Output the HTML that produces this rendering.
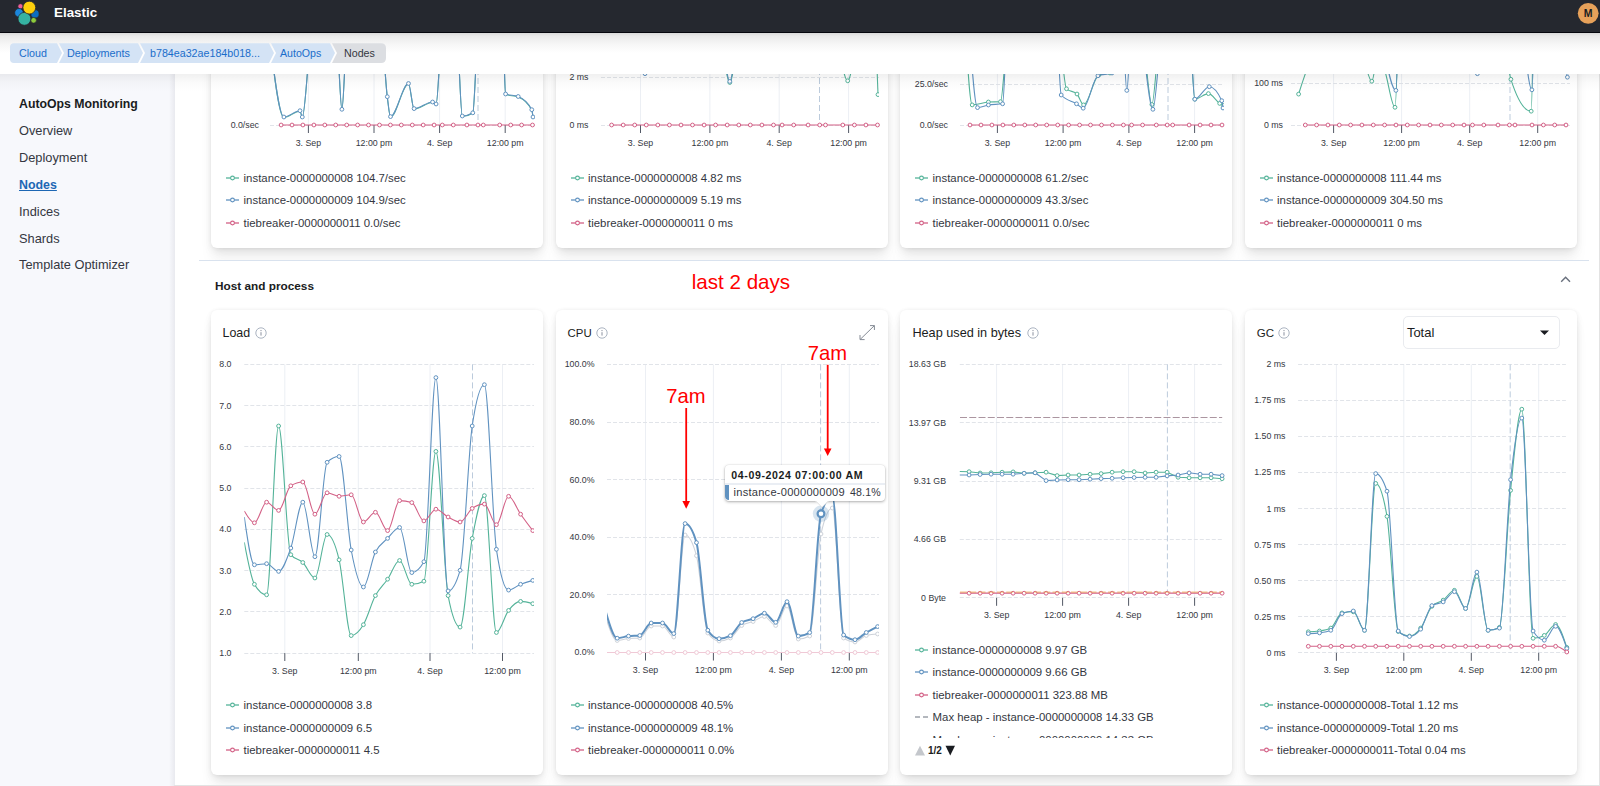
<!DOCTYPE html>
<html><head><meta charset="utf-8"><style>
*{box-sizing:border-box}
html,body{margin:0;padding:0;width:1600px;height:786px;overflow:hidden;background:#fff;font-family:"Liberation Sans",sans-serif;color:#343741}
.abs{position:absolute}
.panel{position:absolute;width:332px;background:#fff;border-radius:6px;box-shadow:0 0.9px 4px -1px rgba(0,0,0,.08),0 2.6px 8px -1px rgba(0,0,0,.06),0 5.7px 12px -1px rgba(0,0,0,.05),0 15px 15px -1px rgba(0,0,0,.04)}
.lg{position:absolute;font-size:11.4px;line-height:16px;white-space:nowrap;color:#343741}
.side{position:absolute;left:19px;font-size:12.8px;line-height:16px;white-space:nowrap;color:#343741}
svg text{font-family:"Liberation Sans",sans-serif}
</style></head><body>
<div class="abs" style="left:0;top:74px;width:175px;height:712px;background:#f7f8fc"></div><div class="abs" style="left:169px;top:74px;width:6px;height:712px;background:linear-gradient(to right,rgba(0,0,30,0),rgba(0,0,30,.035) 60%,rgba(0,0,30,.06))"></div>
<div class="side" style="top:96px;font-weight:bold;font-size:12.3px;color:#1a1c21">AutoOps Monitoring</div>
<div class="side" style="top:122.5px">Overview</div>
<div class="side" style="top:149.5px">Deployment</div>
<div class="side" style="top:176.5px;font-weight:bold;font-size:12.4px;color:#1d67b4;text-decoration:underline">Nodes</div>
<div class="side" style="top:203.5px">Indices</div>
<div class="side" style="top:230.5px">Shards</div>
<div class="side" style="top:257px">Template Optimizer</div>
<div class="abs" style="left:0;top:0;width:1600px;height:260px;overflow:hidden"><div class="panel" style="left:211px;top:-100px;height:347.8px"></div><div class="abs" style="left:211px;top:0;width:332px;height:260px"><svg width="14" height="8" style="position:absolute;left:15px;top:173.6px"><line x1="0" y1="4" x2="13" y2="4" stroke="#54b399" stroke-width="1.3"/><circle cx="6.5" cy="4" r="1.9" fill="#fff" stroke="#54b399" stroke-width="1.1"/></svg><div class="lg" style="left:32.6px;top:169.6px">instance-0000000008 104.7/sec</div><svg width="14" height="8" style="position:absolute;left:15px;top:196.2px"><line x1="0" y1="4" x2="13" y2="4" stroke="#6092c0" stroke-width="1.3"/><circle cx="6.5" cy="4" r="1.9" fill="#fff" stroke="#6092c0" stroke-width="1.1"/></svg><div class="lg" style="left:32.6px;top:192.2px">instance-0000000009 104.9/sec</div><svg width="14" height="8" style="position:absolute;left:15px;top:218.8px"><line x1="0" y1="4" x2="13" y2="4" stroke="#d36086" stroke-width="1.3"/><circle cx="6.5" cy="4" r="1.9" fill="#fff" stroke="#d36086" stroke-width="1.1"/></svg><div class="lg" style="left:32.6px;top:214.8px">tiebreaker-0000000011 0.0/sec</div></div><div class="panel" style="left:555.5px;top:-100px;height:347.8px"></div><div class="abs" style="left:555.5px;top:0;width:332px;height:260px"><svg width="14" height="8" style="position:absolute;left:15px;top:173.6px"><line x1="0" y1="4" x2="13" y2="4" stroke="#54b399" stroke-width="1.3"/><circle cx="6.5" cy="4" r="1.9" fill="#fff" stroke="#54b399" stroke-width="1.1"/></svg><div class="lg" style="left:32.6px;top:169.6px">instance-0000000008 4.82 ms</div><svg width="14" height="8" style="position:absolute;left:15px;top:196.2px"><line x1="0" y1="4" x2="13" y2="4" stroke="#6092c0" stroke-width="1.3"/><circle cx="6.5" cy="4" r="1.9" fill="#fff" stroke="#6092c0" stroke-width="1.1"/></svg><div class="lg" style="left:32.6px;top:192.2px">instance-0000000009 5.19 ms</div><svg width="14" height="8" style="position:absolute;left:15px;top:218.8px"><line x1="0" y1="4" x2="13" y2="4" stroke="#d36086" stroke-width="1.3"/><circle cx="6.5" cy="4" r="1.9" fill="#fff" stroke="#d36086" stroke-width="1.1"/></svg><div class="lg" style="left:32.6px;top:214.8px">tiebreaker-0000000011 0 ms</div></div><div class="panel" style="left:900px;top:-100px;height:347.8px"></div><div class="abs" style="left:900px;top:0;width:332px;height:260px"><svg width="14" height="8" style="position:absolute;left:15px;top:173.6px"><line x1="0" y1="4" x2="13" y2="4" stroke="#54b399" stroke-width="1.3"/><circle cx="6.5" cy="4" r="1.9" fill="#fff" stroke="#54b399" stroke-width="1.1"/></svg><div class="lg" style="left:32.6px;top:169.6px">instance-0000000008 61.2/sec</div><svg width="14" height="8" style="position:absolute;left:15px;top:196.2px"><line x1="0" y1="4" x2="13" y2="4" stroke="#6092c0" stroke-width="1.3"/><circle cx="6.5" cy="4" r="1.9" fill="#fff" stroke="#6092c0" stroke-width="1.1"/></svg><div class="lg" style="left:32.6px;top:192.2px">instance-0000000009 43.3/sec</div><svg width="14" height="8" style="position:absolute;left:15px;top:218.8px"><line x1="0" y1="4" x2="13" y2="4" stroke="#d36086" stroke-width="1.3"/><circle cx="6.5" cy="4" r="1.9" fill="#fff" stroke="#d36086" stroke-width="1.1"/></svg><div class="lg" style="left:32.6px;top:214.8px">tiebreaker-0000000011 0.0/sec</div></div><div class="panel" style="left:1244.5px;top:-100px;height:347.8px"></div><div class="abs" style="left:1244.5px;top:0;width:332px;height:260px"><svg width="14" height="8" style="position:absolute;left:15px;top:173.6px"><line x1="0" y1="4" x2="13" y2="4" stroke="#54b399" stroke-width="1.3"/><circle cx="6.5" cy="4" r="1.9" fill="#fff" stroke="#54b399" stroke-width="1.1"/></svg><div class="lg" style="left:32.6px;top:169.6px">instance-0000000008 111.44 ms</div><svg width="14" height="8" style="position:absolute;left:15px;top:196.2px"><line x1="0" y1="4" x2="13" y2="4" stroke="#6092c0" stroke-width="1.3"/><circle cx="6.5" cy="4" r="1.9" fill="#fff" stroke="#6092c0" stroke-width="1.1"/></svg><div class="lg" style="left:32.6px;top:192.2px">instance-0000000009 304.50 ms</div><svg width="14" height="8" style="position:absolute;left:15px;top:218.8px"><line x1="0" y1="4" x2="13" y2="4" stroke="#d36086" stroke-width="1.3"/><circle cx="6.5" cy="4" r="1.9" fill="#fff" stroke="#d36086" stroke-width="1.1"/></svg><div class="lg" style="left:32.6px;top:214.8px">tiebreaker-0000000011 0 ms</div></div></div><div class="panel" style="left:211px;top:310px;height:464.5px"></div><div class="panel" style="left:555.5px;top:310px;height:464.5px"></div><div class="panel" style="left:900px;top:310px;height:464.5px"></div><div class="panel" style="left:1244.5px;top:310px;height:464.5px"></div>
<div class="abs" style="left:198.5px;top:260px;width:1390.5px;height:1px;background:#d9e2ee"></div>
<div class="abs" style="left:215px;top:278px;font-size:11.8px;font-weight:bold;color:#1a1c21;line-height:16px">Host and process</div>
<svg class="abs" style="left:1558px;top:274px" width="16" height="12"><polyline points="3.2,7.8 7.6,3.2 12,7.8" fill="none" stroke="#69707d" stroke-width="1.4"/></svg>
<div class="abs" style="left:222.5px;top:324.5px;font-size:12.4px;line-height:16px;color:#1a1c21">Load</div>
<svg class="abs" style="left:254.8px;top:326.8px" width="12" height="12"><circle cx="6" cy="6" r="5.2" fill="none" stroke="#a2abba" stroke-width="0.9"/><circle cx="6" cy="3.6" r="0.6" fill="#7d8593"/><line x1="6" y1="5.2" x2="6" y2="8.6" stroke="#7d8593" stroke-width="0.9"/></svg>
<div class="abs" style="left:567.6px;top:324.5px;font-size:11.4px;line-height:16px;color:#1a1c21">CPU</div>
<svg class="abs" style="left:596.4px;top:326.6px" width="12" height="12"><circle cx="6" cy="6" r="5.2" fill="none" stroke="#a2abba" stroke-width="0.9"/><circle cx="6" cy="3.6" r="0.6" fill="#7d8593"/><line x1="6" y1="5.2" x2="6" y2="8.6" stroke="#7d8593" stroke-width="0.9"/></svg>
<div class="abs" style="left:912.4px;top:324.5px;font-size:12.7px;line-height:16px;color:#1a1c21">Heap used in bytes</div>
<svg class="abs" style="left:1026.5px;top:326.6px" width="12" height="12"><circle cx="6" cy="6" r="5.2" fill="none" stroke="#a2abba" stroke-width="0.9"/><circle cx="6" cy="3.6" r="0.6" fill="#7d8593"/><line x1="6" y1="5.2" x2="6" y2="8.6" stroke="#7d8593" stroke-width="0.9"/></svg>
<div class="abs" style="left:1256.7px;top:324.5px;font-size:11.5px;line-height:16px;color:#1a1c21">GC</div>
<svg class="abs" style="left:1277.7px;top:326.7px" width="12" height="12"><circle cx="6" cy="6" r="5.2" fill="none" stroke="#a2abba" stroke-width="0.9"/><circle cx="6" cy="3.6" r="0.6" fill="#7d8593"/><line x1="6" y1="5.2" x2="6" y2="8.6" stroke="#7d8593" stroke-width="0.9"/></svg>
<div class="abs" style="left:1403.3px;top:316.4px;width:156.7px;height:33px;border:1px solid #e9ebef;border-radius:5px;background:#fff"></div>
<div class="abs" style="left:1406.9px;top:324.7px;font-size:13px;line-height:16px;color:#1a1c21">Total</div>
<svg class="abs" style="left:1539px;top:329px" width="12" height="8"><polygon points="1,1.5 10,1.5 5.5,6" fill="#1a1c21"/></svg>
<svg class="abs" style="left:855px;top:321px" width="24" height="24"><path d="M5,14V18.6H9.6M5,18.6L19.4,4.6M15,4.6H19.4V9" fill="none" stroke="#858b95" stroke-width="1"/></svg>
<svg class="abs" style="left:0;top:0" width="1600" height="786"><defs><clipPath id="c1"><rect x="270.0" y="0" width="265.0" height="786"/></clipPath><clipPath id="c2"><rect x="601.0" y="0" width="278.0" height="786"/></clipPath><clipPath id="c3"><rect x="960.0" y="0" width="264.0" height="786"/></clipPath><clipPath id="c4"><rect x="1291.0" y="0" width="279.0" height="786"/></clipPath><clipPath id="cl"><rect x="244.3" y="0" width="289.7" height="786"/></clipPath><clipPath id="cc"><rect x="607.0" y="0" width="272.0" height="786"/></clipPath><clipPath id="ch"><rect x="959.8" y="0" width="262.4" height="786"/></clipPath><clipPath id="cg"><rect x="1298.1" y="0" width="267.8" height="786"/></clipPath></defs><line x1="308.4" y1="60" x2="308.4" y2="125" stroke="#eceff4"/><line x1="374.0" y1="60" x2="374.0" y2="125" stroke="#eceff4"/><line x1="439.6" y1="60" x2="439.6" y2="125" stroke="#eceff4"/><line x1="505.2" y1="60" x2="505.2" y2="125" stroke="#eceff4"/><line x1="270.0" y1="125.5" x2="535.0" y2="125.5" stroke="#e1e4e9" stroke-dasharray="4,2"/><text x="259.0" y="125.0" text-anchor="end" font-size="8.8" fill="#343741" font-weight="normal" dy="0.34em">0.0/sec</text><line x1="478.0" y1="60" x2="478.0" y2="125" stroke="#bccbdc" stroke-dasharray="6,3"/><line x1="308.4" y1="125" x2="308.4" y2="133" stroke="#535966"/><text x="308.4" y="143.0" text-anchor="middle" font-size="8.8" fill="#343741" font-weight="normal" dy="0.34em">3. Sep</text><line x1="374.0" y1="125" x2="374.0" y2="133" stroke="#535966"/><text x="374.0" y="143.0" text-anchor="middle" font-size="8.8" fill="#343741" font-weight="normal" dy="0.34em">12:00 pm</text><line x1="439.6" y1="125" x2="439.6" y2="133" stroke="#535966"/><text x="439.6" y="143.0" text-anchor="middle" font-size="8.8" fill="#343741" font-weight="normal" dy="0.34em">4. Sep</text><line x1="505.2" y1="125" x2="505.2" y2="133" stroke="#535966"/><text x="505.2" y="143.0" text-anchor="middle" font-size="8.8" fill="#343741" font-weight="normal" dy="0.34em">12:00 pm</text><g opacity="1" clip-path="url(#c1)"><path d="M270.0,40.0C274.6,78.8 279.3,117.5 283.9,117.5C289.3,117.5 294.6,111.2 300.0,111.2C300.8,111.2 301.5,117.5 302.3,117.5C305.4,117.5 308.5,40.0 311.6,40.0C320.0,40.0 328.3,40.0 336.7,40.0C338.4,40.0 340.2,109.8 341.9,109.8C343.6,109.8 345.3,40.0 347.0,40.0C358.6,40.0 370.1,40.0 381.7,40.0C383.6,40.0 385.4,82.9 387.3,97.2C388.4,105.4 389.4,117.1 390.5,117.1C396.5,117.1 402.5,84.0 408.5,84.0C410.4,84.0 412.2,109.1 414.1,109.1C420.3,109.1 426.4,102.5 432.6,102.5C433.8,102.5 434.9,104.5 436.1,104.5C438.0,104.5 439.9,40.0 441.8,40.0C446.9,40.0 451.9,40.0 457.0,40.0C458.8,40.0 460.5,116.5 462.3,116.5C465.8,116.5 469.3,115.4 472.8,113.3C474.5,112.2 476.3,40.0 478.0,40.0C486.3,40.0 494.7,40.0 503.0,40.0C503.9,40.0 504.7,94.2 505.6,94.5C509.8,96.2 514.0,95.3 518.2,97.0C522.7,98.8 527.3,101.4 531.8,110.2C532.2,111.0 532.6,114.2 533.0,117.5" fill="none" stroke="#54b399" stroke-width="1.1" stroke-linejoin="round"/></g><g opacity="1" clip-path="url(#c1)"><path d="M270.0,40.0C274.6,78.5 279.3,117.0 283.9,117.0C289.3,117.0 294.6,110.7 300.0,110.7C300.8,110.7 301.5,117.0 302.3,117.0C305.4,117.0 308.5,40.0 311.6,40.0C320.0,40.0 328.3,40.0 336.7,40.0C338.4,40.0 340.2,109.3 341.9,109.3C343.6,109.3 345.3,40.0 347.0,40.0C358.6,40.0 370.1,40.0 381.7,40.0C383.6,40.0 385.4,82.4 387.3,96.7C388.4,104.8 389.4,116.6 390.5,116.6C396.5,116.6 402.5,83.5 408.5,83.5C410.4,83.5 412.2,108.6 414.1,108.6C420.3,108.6 426.4,102.0 432.6,102.0C433.8,102.0 434.9,104.0 436.1,104.0C438.0,104.0 439.9,40.0 441.8,40.0C446.9,40.0 451.9,40.0 457.0,40.0C458.8,40.0 460.5,116.0 462.3,116.0C465.8,116.0 469.3,114.9 472.8,112.8C474.5,111.7 476.3,40.0 478.0,40.0C486.3,40.0 494.7,40.0 503.0,40.0C503.9,40.0 504.7,93.7 505.6,94.0C509.8,95.7 514.0,94.8 518.2,96.5C522.7,98.3 527.3,100.9 531.8,109.7C532.2,110.5 532.6,113.7 533.0,117.0" fill="none" stroke="#6092c0" stroke-width="1.1" stroke-linejoin="round"/><circle cx="270.0" cy="40.0" r="1.9" fill="#fff" stroke="#6092c0" stroke-width="1"/><circle cx="283.9" cy="117.0" r="1.9" fill="#fff" stroke="#6092c0" stroke-width="1"/><circle cx="300.0" cy="110.7" r="1.9" fill="#fff" stroke="#6092c0" stroke-width="1"/><circle cx="302.3" cy="117.0" r="1.9" fill="#fff" stroke="#6092c0" stroke-width="1"/><circle cx="311.6" cy="40.0" r="1.9" fill="#fff" stroke="#6092c0" stroke-width="1"/><circle cx="336.7" cy="40.0" r="1.9" fill="#fff" stroke="#6092c0" stroke-width="1"/><circle cx="341.9" cy="109.3" r="1.9" fill="#fff" stroke="#6092c0" stroke-width="1"/><circle cx="347.0" cy="40.0" r="1.9" fill="#fff" stroke="#6092c0" stroke-width="1"/><circle cx="381.7" cy="40.0" r="1.9" fill="#fff" stroke="#6092c0" stroke-width="1"/><circle cx="387.3" cy="96.7" r="1.9" fill="#fff" stroke="#6092c0" stroke-width="1"/><circle cx="390.5" cy="116.6" r="1.9" fill="#fff" stroke="#6092c0" stroke-width="1"/><circle cx="408.5" cy="83.5" r="1.9" fill="#fff" stroke="#6092c0" stroke-width="1"/><circle cx="414.1" cy="108.6" r="1.9" fill="#fff" stroke="#6092c0" stroke-width="1"/><circle cx="432.6" cy="102.0" r="1.9" fill="#fff" stroke="#6092c0" stroke-width="1"/><circle cx="436.1" cy="104.0" r="1.9" fill="#fff" stroke="#6092c0" stroke-width="1"/><circle cx="441.8" cy="40.0" r="1.9" fill="#fff" stroke="#6092c0" stroke-width="1"/><circle cx="457.0" cy="40.0" r="1.9" fill="#fff" stroke="#6092c0" stroke-width="1"/><circle cx="462.3" cy="116.0" r="1.9" fill="#fff" stroke="#6092c0" stroke-width="1"/><circle cx="472.8" cy="112.8" r="1.9" fill="#fff" stroke="#6092c0" stroke-width="1"/><circle cx="478.0" cy="40.0" r="1.9" fill="#fff" stroke="#6092c0" stroke-width="1"/><circle cx="503.0" cy="40.0" r="1.9" fill="#fff" stroke="#6092c0" stroke-width="1"/><circle cx="505.6" cy="94.0" r="1.9" fill="#fff" stroke="#6092c0" stroke-width="1"/><circle cx="518.2" cy="96.5" r="1.9" fill="#fff" stroke="#6092c0" stroke-width="1"/><circle cx="531.8" cy="109.7" r="1.9" fill="#fff" stroke="#6092c0" stroke-width="1"/><circle cx="533.0" cy="117.0" r="1.9" fill="#fff" stroke="#6092c0" stroke-width="1"/></g><g opacity="1"><path d="M281.1,125.0L292.0,125.0L302.9,125.0L313.9,125.0L324.8,125.0L335.7,125.0L346.7,125.0L357.6,125.0L368.5,125.0L379.5,125.0L390.4,125.0L401.3,125.0L412.3,125.0L423.2,125.0L434.1,125.0L442.3,125.0L453.3,125.0L466.9,125.0L477.9,125.0L483.3,125.0L499.7,125.0L510.7,125.0L521.6,125.0L532.5,125.0" fill="none" stroke="#d36086" stroke-width="1.1" stroke-linejoin="round"/><circle cx="281.1" cy="125.0" r="1.9" fill="#fff" stroke="#d36086" stroke-width="1"/><circle cx="292.0" cy="125.0" r="1.9" fill="#fff" stroke="#d36086" stroke-width="1"/><circle cx="302.9" cy="125.0" r="1.9" fill="#fff" stroke="#d36086" stroke-width="1"/><circle cx="313.9" cy="125.0" r="1.9" fill="#fff" stroke="#d36086" stroke-width="1"/><circle cx="324.8" cy="125.0" r="1.9" fill="#fff" stroke="#d36086" stroke-width="1"/><circle cx="335.7" cy="125.0" r="1.9" fill="#fff" stroke="#d36086" stroke-width="1"/><circle cx="346.7" cy="125.0" r="1.9" fill="#fff" stroke="#d36086" stroke-width="1"/><circle cx="357.6" cy="125.0" r="1.9" fill="#fff" stroke="#d36086" stroke-width="1"/><circle cx="368.5" cy="125.0" r="1.9" fill="#fff" stroke="#d36086" stroke-width="1"/><circle cx="379.5" cy="125.0" r="1.9" fill="#fff" stroke="#d36086" stroke-width="1"/><circle cx="390.4" cy="125.0" r="1.9" fill="#fff" stroke="#d36086" stroke-width="1"/><circle cx="401.3" cy="125.0" r="1.9" fill="#fff" stroke="#d36086" stroke-width="1"/><circle cx="412.3" cy="125.0" r="1.9" fill="#fff" stroke="#d36086" stroke-width="1"/><circle cx="423.2" cy="125.0" r="1.9" fill="#fff" stroke="#d36086" stroke-width="1"/><circle cx="434.1" cy="125.0" r="1.9" fill="#fff" stroke="#d36086" stroke-width="1"/><circle cx="442.3" cy="125.0" r="1.9" fill="#fff" stroke="#d36086" stroke-width="1"/><circle cx="453.3" cy="125.0" r="1.9" fill="#fff" stroke="#d36086" stroke-width="1"/><circle cx="466.9" cy="125.0" r="1.9" fill="#fff" stroke="#d36086" stroke-width="1"/><circle cx="477.9" cy="125.0" r="1.9" fill="#fff" stroke="#d36086" stroke-width="1"/><circle cx="483.3" cy="125.0" r="1.9" fill="#fff" stroke="#d36086" stroke-width="1"/><circle cx="499.7" cy="125.0" r="1.9" fill="#fff" stroke="#d36086" stroke-width="1"/><circle cx="510.7" cy="125.0" r="1.9" fill="#fff" stroke="#d36086" stroke-width="1"/><circle cx="521.6" cy="125.0" r="1.9" fill="#fff" stroke="#d36086" stroke-width="1"/><circle cx="532.5" cy="125.0" r="1.9" fill="#fff" stroke="#d36086" stroke-width="1"/></g><line x1="640.5" y1="60" x2="640.5" y2="125" stroke="#eceff4"/><line x1="709.9" y1="60" x2="709.9" y2="125" stroke="#eceff4"/><line x1="779.2" y1="60" x2="779.2" y2="125" stroke="#eceff4"/><line x1="848.6" y1="60" x2="848.6" y2="125" stroke="#eceff4"/><line x1="601.0" y1="125.5" x2="879.0" y2="125.5" stroke="#e1e4e9" stroke-dasharray="4,2"/><text x="588.5" y="125.0" text-anchor="end" font-size="8.8" fill="#343741" font-weight="normal" dy="0.34em">0 ms</text><line x1="601.0" y1="77.5" x2="879.0" y2="77.5" stroke="#e1e4e9" stroke-dasharray="4,2"/><text x="588.5" y="77.0" text-anchor="end" font-size="8.8" fill="#343741" font-weight="normal" dy="0.34em">2 ms</text><line x1="819.5" y1="60" x2="819.5" y2="125" stroke="#bccbdc" stroke-dasharray="6,3"/><line x1="640.5" y1="125" x2="640.5" y2="133" stroke="#535966"/><text x="640.5" y="143.0" text-anchor="middle" font-size="8.8" fill="#343741" font-weight="normal" dy="0.34em">3. Sep</text><line x1="709.9" y1="125" x2="709.9" y2="133" stroke="#535966"/><text x="709.9" y="143.0" text-anchor="middle" font-size="8.8" fill="#343741" font-weight="normal" dy="0.34em">12:00 pm</text><line x1="779.2" y1="125" x2="779.2" y2="133" stroke="#535966"/><text x="779.2" y="143.0" text-anchor="middle" font-size="8.8" fill="#343741" font-weight="normal" dy="0.34em">4. Sep</text><line x1="848.6" y1="125" x2="848.6" y2="133" stroke="#535966"/><text x="848.6" y="143.0" text-anchor="middle" font-size="8.8" fill="#343741" font-weight="normal" dy="0.34em">12:00 pm</text><g opacity="1" clip-path="url(#c2)"><path d="M612.0,40.0C623.0,56.8 634.0,73.7 645.0,73.7C650.0,73.7 655.0,56.9 660.0,40.0" fill="none" stroke="#6092c0" stroke-width="1.1" stroke-linejoin="round"/><circle cx="612.0" cy="40.0" r="1.9" fill="#fff" stroke="#6092c0" stroke-width="1"/><circle cx="645.0" cy="73.7" r="1.9" fill="#fff" stroke="#6092c0" stroke-width="1"/><circle cx="660.0" cy="40.0" r="1.9" fill="#fff" stroke="#6092c0" stroke-width="1"/></g><g opacity="1" clip-path="url(#c2)"><path d="M722.0,40.0C724.6,61.2 727.2,82.5 729.8,82.5C732.2,82.5 734.6,61.2 737.0,40.0" fill="none" stroke="#54b399" stroke-width="1.1" stroke-linejoin="round"/><circle cx="722.0" cy="40.0" r="1.9" fill="#fff" stroke="#54b399" stroke-width="1"/><circle cx="729.8" cy="82.5" r="1.9" fill="#fff" stroke="#54b399" stroke-width="1"/><circle cx="737.0" cy="40.0" r="1.9" fill="#fff" stroke="#54b399" stroke-width="1"/></g><g opacity="1" clip-path="url(#c2)"><path d="M723.0,40.0C725.3,60.7 727.5,81.4 729.8,81.4C731.9,81.4 733.9,60.7 736.0,40.0" fill="none" stroke="#6092c0" stroke-width="1.1" stroke-linejoin="round"/><circle cx="723.0" cy="40.0" r="1.9" fill="#fff" stroke="#6092c0" stroke-width="1"/><circle cx="729.8" cy="81.4" r="1.9" fill="#fff" stroke="#6092c0" stroke-width="1"/><circle cx="736.0" cy="40.0" r="1.9" fill="#fff" stroke="#6092c0" stroke-width="1"/></g><g opacity="1" clip-path="url(#c2)"><path d="M838.0,40.0C841.2,60.4 844.5,80.8 847.7,80.8C850.5,80.8 853.2,60.4 856.0,40.0" fill="none" stroke="#54b399" stroke-width="1.1" stroke-linejoin="round"/><circle cx="838.0" cy="40.0" r="1.9" fill="#fff" stroke="#54b399" stroke-width="1"/><circle cx="847.7" cy="80.8" r="1.9" fill="#fff" stroke="#54b399" stroke-width="1"/><circle cx="856.0" cy="40.0" r="1.9" fill="#fff" stroke="#54b399" stroke-width="1"/></g><g opacity="1" clip-path="url(#c2)"><path d="M876.0,40.0L878.0,94.6" fill="none" stroke="#54b399" stroke-width="1.1" stroke-linejoin="round"/><circle cx="876.0" cy="40.0" r="1.9" fill="#fff" stroke="#54b399" stroke-width="1"/><circle cx="878.0" cy="94.6" r="1.9" fill="#fff" stroke="#54b399" stroke-width="1"/></g><g opacity="1"><path d="M611.6,125.0L623.2,125.0L634.7,125.0L646.3,125.0L657.8,125.0L669.4,125.0L681.0,125.0L692.5,125.0L704.1,125.0L715.6,125.0L727.2,125.0L738.8,125.0L750.3,125.0L761.9,125.0L773.5,125.0L782.1,125.0L793.7,125.0L808.1,125.0L819.7,125.0L825.5,125.0L842.8,125.0L854.4,125.0L865.9,125.0L877.5,125.0" fill="none" stroke="#d36086" stroke-width="1.1" stroke-linejoin="round"/><circle cx="611.6" cy="125.0" r="1.9" fill="#fff" stroke="#d36086" stroke-width="1"/><circle cx="623.2" cy="125.0" r="1.9" fill="#fff" stroke="#d36086" stroke-width="1"/><circle cx="634.7" cy="125.0" r="1.9" fill="#fff" stroke="#d36086" stroke-width="1"/><circle cx="646.3" cy="125.0" r="1.9" fill="#fff" stroke="#d36086" stroke-width="1"/><circle cx="657.8" cy="125.0" r="1.9" fill="#fff" stroke="#d36086" stroke-width="1"/><circle cx="669.4" cy="125.0" r="1.9" fill="#fff" stroke="#d36086" stroke-width="1"/><circle cx="681.0" cy="125.0" r="1.9" fill="#fff" stroke="#d36086" stroke-width="1"/><circle cx="692.5" cy="125.0" r="1.9" fill="#fff" stroke="#d36086" stroke-width="1"/><circle cx="704.1" cy="125.0" r="1.9" fill="#fff" stroke="#d36086" stroke-width="1"/><circle cx="715.6" cy="125.0" r="1.9" fill="#fff" stroke="#d36086" stroke-width="1"/><circle cx="727.2" cy="125.0" r="1.9" fill="#fff" stroke="#d36086" stroke-width="1"/><circle cx="738.8" cy="125.0" r="1.9" fill="#fff" stroke="#d36086" stroke-width="1"/><circle cx="750.3" cy="125.0" r="1.9" fill="#fff" stroke="#d36086" stroke-width="1"/><circle cx="761.9" cy="125.0" r="1.9" fill="#fff" stroke="#d36086" stroke-width="1"/><circle cx="773.5" cy="125.0" r="1.9" fill="#fff" stroke="#d36086" stroke-width="1"/><circle cx="782.1" cy="125.0" r="1.9" fill="#fff" stroke="#d36086" stroke-width="1"/><circle cx="793.7" cy="125.0" r="1.9" fill="#fff" stroke="#d36086" stroke-width="1"/><circle cx="808.1" cy="125.0" r="1.9" fill="#fff" stroke="#d36086" stroke-width="1"/><circle cx="819.7" cy="125.0" r="1.9" fill="#fff" stroke="#d36086" stroke-width="1"/><circle cx="825.5" cy="125.0" r="1.9" fill="#fff" stroke="#d36086" stroke-width="1"/><circle cx="842.8" cy="125.0" r="1.9" fill="#fff" stroke="#d36086" stroke-width="1"/><circle cx="854.4" cy="125.0" r="1.9" fill="#fff" stroke="#d36086" stroke-width="1"/><circle cx="865.9" cy="125.0" r="1.9" fill="#fff" stroke="#d36086" stroke-width="1"/><circle cx="877.5" cy="125.0" r="1.9" fill="#fff" stroke="#d36086" stroke-width="1"/></g><line x1="997.4" y1="60" x2="997.4" y2="125" stroke="#eceff4"/><line x1="1063.1" y1="60" x2="1063.1" y2="125" stroke="#eceff4"/><line x1="1128.9" y1="60" x2="1128.9" y2="125" stroke="#eceff4"/><line x1="1194.6" y1="60" x2="1194.6" y2="125" stroke="#eceff4"/><line x1="960.0" y1="125.5" x2="1224.0" y2="125.5" stroke="#e1e4e9" stroke-dasharray="4,2"/><text x="948.0" y="125.0" text-anchor="end" font-size="8.8" fill="#343741" font-weight="normal" dy="0.34em">0.0/sec</text><line x1="960.0" y1="84.5" x2="1224.0" y2="84.5" stroke="#e1e4e9" stroke-dasharray="4,2"/><text x="948.0" y="84.0" text-anchor="end" font-size="8.8" fill="#343741" font-weight="normal" dy="0.34em">25.0/sec</text><line x1="1168.0" y1="60" x2="1168.0" y2="125" stroke="#bccbdc" stroke-dasharray="6,3"/><line x1="997.4" y1="125" x2="997.4" y2="133" stroke="#535966"/><text x="997.4" y="143.0" text-anchor="middle" font-size="8.8" fill="#343741" font-weight="normal" dy="0.34em">3. Sep</text><line x1="1063.1" y1="125" x2="1063.1" y2="133" stroke="#535966"/><text x="1063.1" y="143.0" text-anchor="middle" font-size="8.8" fill="#343741" font-weight="normal" dy="0.34em">12:00 pm</text><line x1="1128.9" y1="125" x2="1128.9" y2="133" stroke="#535966"/><text x="1128.9" y="143.0" text-anchor="middle" font-size="8.8" fill="#343741" font-weight="normal" dy="0.34em">4. Sep</text><line x1="1194.6" y1="125" x2="1194.6" y2="133" stroke="#535966"/><text x="1194.6" y="143.0" text-anchor="middle" font-size="8.8" fill="#343741" font-weight="normal" dy="0.34em">12:00 pm</text><g opacity="1" clip-path="url(#c3)"><path d="M966.0,40.0C968.1,72.5 970.1,104.9 972.2,104.9C977.6,104.9 983.0,102.3 988.4,102.0C992.4,101.8 996.5,101.9 1000.5,101.7C1002.9,101.6 1005.4,40.0 1007.8,40.0C1024.9,40.0 1041.9,40.0 1059.0,40.0C1061.5,40.0 1064.0,86.3 1066.5,88.8C1070.0,92.3 1073.5,90.5 1077.0,94.0C1079.2,96.2 1081.4,104.9 1083.6,104.9C1088.7,104.9 1093.8,76.8 1098.9,75.0C1102.6,73.7 1106.3,74.3 1110.0,73.0C1114.0,71.6 1118.0,40.0 1122.0,40.0C1128.7,40.0 1135.3,40.0 1142.0,40.0C1145.3,40.0 1148.6,104.5 1151.9,104.5C1154.6,104.5 1157.3,40.0 1160.0,40.0C1170.0,40.0 1180.0,40.0 1190.0,40.0C1191.6,40.0 1193.2,99.2 1194.8,99.2C1199.3,99.2 1203.9,93.6 1208.4,93.6C1212.2,93.6 1215.9,101.0 1219.7,103.4C1221.0,104.2 1222.2,104.9 1223.5,105.5" fill="none" stroke="#54b399" stroke-width="1.1" stroke-linejoin="round"/><circle cx="966.0" cy="40.0" r="1.9" fill="#fff" stroke="#54b399" stroke-width="1"/><circle cx="972.2" cy="104.9" r="1.9" fill="#fff" stroke="#54b399" stroke-width="1"/><circle cx="988.4" cy="102.0" r="1.9" fill="#fff" stroke="#54b399" stroke-width="1"/><circle cx="1000.5" cy="101.7" r="1.9" fill="#fff" stroke="#54b399" stroke-width="1"/><circle cx="1007.8" cy="40.0" r="1.9" fill="#fff" stroke="#54b399" stroke-width="1"/><circle cx="1059.0" cy="40.0" r="1.9" fill="#fff" stroke="#54b399" stroke-width="1"/><circle cx="1066.5" cy="88.8" r="1.9" fill="#fff" stroke="#54b399" stroke-width="1"/><circle cx="1077.0" cy="94.0" r="1.9" fill="#fff" stroke="#54b399" stroke-width="1"/><circle cx="1083.6" cy="104.9" r="1.9" fill="#fff" stroke="#54b399" stroke-width="1"/><circle cx="1098.9" cy="75.0" r="1.9" fill="#fff" stroke="#54b399" stroke-width="1"/><circle cx="1110.0" cy="73.0" r="1.9" fill="#fff" stroke="#54b399" stroke-width="1"/><circle cx="1122.0" cy="40.0" r="1.9" fill="#fff" stroke="#54b399" stroke-width="1"/><circle cx="1142.0" cy="40.0" r="1.9" fill="#fff" stroke="#54b399" stroke-width="1"/><circle cx="1151.9" cy="104.5" r="1.9" fill="#fff" stroke="#54b399" stroke-width="1"/><circle cx="1160.0" cy="40.0" r="1.9" fill="#fff" stroke="#54b399" stroke-width="1"/><circle cx="1190.0" cy="40.0" r="1.9" fill="#fff" stroke="#54b399" stroke-width="1"/><circle cx="1194.8" cy="99.2" r="1.9" fill="#fff" stroke="#54b399" stroke-width="1"/><circle cx="1208.4" cy="93.6" r="1.9" fill="#fff" stroke="#54b399" stroke-width="1"/><circle cx="1219.7" cy="103.4" r="1.9" fill="#fff" stroke="#54b399" stroke-width="1"/><circle cx="1223.5" cy="105.5" r="1.9" fill="#fff" stroke="#54b399" stroke-width="1"/></g><g opacity="1" clip-path="url(#c3)"><path d="M970.0,40.0C972.5,73.8 975.0,107.6 977.5,107.6C981.1,107.6 984.8,105.6 988.4,105.0C993.1,104.2 997.9,104.6 1002.6,103.8C1004.1,103.6 1005.5,40.0 1007.0,40.0C1023.7,40.0 1040.3,40.0 1057.0,40.0C1058.4,40.0 1059.8,93.4 1061.2,95.0C1066.3,100.9 1071.4,100.6 1076.5,103.8C1078.7,105.2 1081.0,108.2 1083.2,108.2C1088.1,108.2 1093.0,77.7 1097.9,75.8C1102.6,73.9 1107.3,74.9 1112.0,73.0C1114.7,71.9 1117.3,40.0 1120.0,40.0C1121.0,40.0 1122.0,40.0 1123.0,40.0C1124.3,40.0 1125.5,90.4 1126.8,90.4C1128.2,90.4 1129.6,40.0 1131.0,40.0C1134.0,40.0 1137.0,40.0 1140.0,40.0C1144.3,40.0 1148.6,109.3 1152.9,109.3C1155.9,109.3 1159.0,40.0 1162.0,40.0C1171.3,40.0 1180.7,40.0 1190.0,40.0C1191.6,40.0 1193.2,99.2 1194.8,99.2C1199.6,99.2 1204.5,86.7 1209.3,86.7C1213.5,86.7 1217.6,91.4 1221.8,100.7C1222.2,101.6 1222.6,104.8 1223.0,108.0" fill="none" stroke="#6092c0" stroke-width="1.1" stroke-linejoin="round"/><circle cx="970.0" cy="40.0" r="1.9" fill="#fff" stroke="#6092c0" stroke-width="1"/><circle cx="977.5" cy="107.6" r="1.9" fill="#fff" stroke="#6092c0" stroke-width="1"/><circle cx="988.4" cy="105.0" r="1.9" fill="#fff" stroke="#6092c0" stroke-width="1"/><circle cx="1002.6" cy="103.8" r="1.9" fill="#fff" stroke="#6092c0" stroke-width="1"/><circle cx="1007.0" cy="40.0" r="1.9" fill="#fff" stroke="#6092c0" stroke-width="1"/><circle cx="1057.0" cy="40.0" r="1.9" fill="#fff" stroke="#6092c0" stroke-width="1"/><circle cx="1061.2" cy="95.0" r="1.9" fill="#fff" stroke="#6092c0" stroke-width="1"/><circle cx="1076.5" cy="103.8" r="1.9" fill="#fff" stroke="#6092c0" stroke-width="1"/><circle cx="1083.2" cy="108.2" r="1.9" fill="#fff" stroke="#6092c0" stroke-width="1"/><circle cx="1097.9" cy="75.8" r="1.9" fill="#fff" stroke="#6092c0" stroke-width="1"/><circle cx="1112.0" cy="73.0" r="1.9" fill="#fff" stroke="#6092c0" stroke-width="1"/><circle cx="1120.0" cy="40.0" r="1.9" fill="#fff" stroke="#6092c0" stroke-width="1"/><circle cx="1123.0" cy="40.0" r="1.9" fill="#fff" stroke="#6092c0" stroke-width="1"/><circle cx="1126.8" cy="90.4" r="1.9" fill="#fff" stroke="#6092c0" stroke-width="1"/><circle cx="1131.0" cy="40.0" r="1.9" fill="#fff" stroke="#6092c0" stroke-width="1"/><circle cx="1140.0" cy="40.0" r="1.9" fill="#fff" stroke="#6092c0" stroke-width="1"/><circle cx="1152.9" cy="109.3" r="1.9" fill="#fff" stroke="#6092c0" stroke-width="1"/><circle cx="1162.0" cy="40.0" r="1.9" fill="#fff" stroke="#6092c0" stroke-width="1"/><circle cx="1190.0" cy="40.0" r="1.9" fill="#fff" stroke="#6092c0" stroke-width="1"/><circle cx="1194.8" cy="99.2" r="1.9" fill="#fff" stroke="#6092c0" stroke-width="1"/><circle cx="1209.3" cy="86.7" r="1.9" fill="#fff" stroke="#6092c0" stroke-width="1"/><circle cx="1221.8" cy="100.7" r="1.9" fill="#fff" stroke="#6092c0" stroke-width="1"/><circle cx="1223.0" cy="108.0" r="1.9" fill="#fff" stroke="#6092c0" stroke-width="1"/></g><g opacity="1"><path d="M970.0,125.0L981.0,125.0L991.9,125.0L1002.9,125.0L1013.8,125.0L1024.8,125.0L1035.7,125.0L1046.7,125.0L1057.7,125.0L1068.6,125.0L1079.6,125.0L1090.5,125.0L1101.5,125.0L1112.4,125.0L1123.4,125.0L1131.6,125.0L1142.6,125.0L1156.3,125.0L1167.2,125.0L1172.7,125.0L1189.1,125.0L1200.1,125.0L1211.0,125.0L1222.0,125.0" fill="none" stroke="#d36086" stroke-width="1.1" stroke-linejoin="round"/><circle cx="970.0" cy="125.0" r="1.9" fill="#fff" stroke="#d36086" stroke-width="1"/><circle cx="981.0" cy="125.0" r="1.9" fill="#fff" stroke="#d36086" stroke-width="1"/><circle cx="991.9" cy="125.0" r="1.9" fill="#fff" stroke="#d36086" stroke-width="1"/><circle cx="1002.9" cy="125.0" r="1.9" fill="#fff" stroke="#d36086" stroke-width="1"/><circle cx="1013.8" cy="125.0" r="1.9" fill="#fff" stroke="#d36086" stroke-width="1"/><circle cx="1024.8" cy="125.0" r="1.9" fill="#fff" stroke="#d36086" stroke-width="1"/><circle cx="1035.7" cy="125.0" r="1.9" fill="#fff" stroke="#d36086" stroke-width="1"/><circle cx="1046.7" cy="125.0" r="1.9" fill="#fff" stroke="#d36086" stroke-width="1"/><circle cx="1057.7" cy="125.0" r="1.9" fill="#fff" stroke="#d36086" stroke-width="1"/><circle cx="1068.6" cy="125.0" r="1.9" fill="#fff" stroke="#d36086" stroke-width="1"/><circle cx="1079.6" cy="125.0" r="1.9" fill="#fff" stroke="#d36086" stroke-width="1"/><circle cx="1090.5" cy="125.0" r="1.9" fill="#fff" stroke="#d36086" stroke-width="1"/><circle cx="1101.5" cy="125.0" r="1.9" fill="#fff" stroke="#d36086" stroke-width="1"/><circle cx="1112.4" cy="125.0" r="1.9" fill="#fff" stroke="#d36086" stroke-width="1"/><circle cx="1123.4" cy="125.0" r="1.9" fill="#fff" stroke="#d36086" stroke-width="1"/><circle cx="1131.6" cy="125.0" r="1.9" fill="#fff" stroke="#d36086" stroke-width="1"/><circle cx="1142.6" cy="125.0" r="1.9" fill="#fff" stroke="#d36086" stroke-width="1"/><circle cx="1156.3" cy="125.0" r="1.9" fill="#fff" stroke="#d36086" stroke-width="1"/><circle cx="1167.2" cy="125.0" r="1.9" fill="#fff" stroke="#d36086" stroke-width="1"/><circle cx="1172.7" cy="125.0" r="1.9" fill="#fff" stroke="#d36086" stroke-width="1"/><circle cx="1189.1" cy="125.0" r="1.9" fill="#fff" stroke="#d36086" stroke-width="1"/><circle cx="1200.1" cy="125.0" r="1.9" fill="#fff" stroke="#d36086" stroke-width="1"/><circle cx="1211.0" cy="125.0" r="1.9" fill="#fff" stroke="#d36086" stroke-width="1"/><circle cx="1222.0" cy="125.0" r="1.9" fill="#fff" stroke="#d36086" stroke-width="1"/></g><line x1="1333.6" y1="60" x2="1333.6" y2="125" stroke="#eceff4"/><line x1="1401.6" y1="60" x2="1401.6" y2="125" stroke="#eceff4"/><line x1="1469.7" y1="60" x2="1469.7" y2="125" stroke="#eceff4"/><line x1="1537.7" y1="60" x2="1537.7" y2="125" stroke="#eceff4"/><line x1="1291.0" y1="125.5" x2="1570.0" y2="125.5" stroke="#e1e4e9" stroke-dasharray="4,2"/><text x="1283.0" y="125.0" text-anchor="end" font-size="8.8" fill="#343741" font-weight="normal" dy="0.34em">0 ms</text><line x1="1291.0" y1="83.5" x2="1570.0" y2="83.5" stroke="#e1e4e9" stroke-dasharray="4,2"/><text x="1283.0" y="83.4" text-anchor="end" font-size="8.8" fill="#343741" font-weight="normal" dy="0.34em">100 ms</text><line x1="1510.0" y1="60" x2="1510.0" y2="125" stroke="#bccbdc" stroke-dasharray="6,3"/><line x1="1333.6" y1="125" x2="1333.6" y2="133" stroke="#535966"/><text x="1333.6" y="143.0" text-anchor="middle" font-size="8.8" fill="#343741" font-weight="normal" dy="0.34em">3. Sep</text><line x1="1401.6" y1="125" x2="1401.6" y2="133" stroke="#535966"/><text x="1401.6" y="143.0" text-anchor="middle" font-size="8.8" fill="#343741" font-weight="normal" dy="0.34em">12:00 pm</text><line x1="1469.7" y1="125" x2="1469.7" y2="133" stroke="#535966"/><text x="1469.7" y="143.0" text-anchor="middle" font-size="8.8" fill="#343741" font-weight="normal" dy="0.34em">4. Sep</text><line x1="1537.7" y1="125" x2="1537.7" y2="133" stroke="#535966"/><text x="1537.7" y="143.0" text-anchor="middle" font-size="8.8" fill="#343741" font-weight="normal" dy="0.34em">12:00 pm</text><g opacity="1" clip-path="url(#c4)"><path d="M1298.6,94.1C1303.1,79.9 1307.5,65.7 1312.0,58.0C1317.0,49.3 1322.0,45.0 1327.0,45.0C1331.5,45.0 1336.1,72.5 1340.6,72.5C1344.4,72.5 1348.2,45.0 1352.0,45.0C1355.7,45.0 1359.3,50.7 1363.0,58.0C1365.9,63.8 1368.9,81.2 1371.8,81.2C1373.9,81.2 1375.9,55.0 1378.0,55.0C1380.2,55.0 1382.4,63.9 1384.6,70.0C1388.1,79.6 1391.5,107.3 1395.0,107.3C1396.0,107.3 1397.0,73.7 1398.0,40.0" fill="none" stroke="#54b399" stroke-width="1.1" stroke-linejoin="round"/><circle cx="1298.6" cy="94.1" r="1.9" fill="#fff" stroke="#54b399" stroke-width="1"/></g><g opacity="1"><path d="M1371.8,81.2" fill="none" stroke="#54b399" stroke-width="1.1" stroke-linejoin="round"/><circle cx="1371.8" cy="81.2" r="1.9" fill="#fff" stroke="#54b399" stroke-width="1"/></g><g opacity="1"><path d="M1395.0,107.3" fill="none" stroke="#54b399" stroke-width="1.1" stroke-linejoin="round"/><circle cx="1395.0" cy="107.3" r="1.9" fill="#fff" stroke="#54b399" stroke-width="1"/></g><g opacity="1" clip-path="url(#c4)"><path d="M1384.0,50.0C1388.0,70.2 1391.9,90.4 1395.9,90.4C1396.6,90.4 1397.3,65.2 1398.0,40.0" fill="none" stroke="#6092c0" stroke-width="1.1" stroke-linejoin="round"/><circle cx="1384.0" cy="50.0" r="1.9" fill="#fff" stroke="#6092c0" stroke-width="1"/><circle cx="1395.9" cy="90.4" r="1.9" fill="#fff" stroke="#6092c0" stroke-width="1"/><circle cx="1398.0" cy="40.0" r="1.9" fill="#fff" stroke="#6092c0" stroke-width="1"/></g><g opacity="1" clip-path="url(#c4)"><path d="M1470.0,40.0C1472.5,56.9 1474.9,73.7 1477.4,73.7C1479.9,73.7 1482.5,56.9 1485.0,40.0" fill="none" stroke="#6092c0" stroke-width="1.1" stroke-linejoin="round"/><circle cx="1470.0" cy="40.0" r="1.9" fill="#fff" stroke="#6092c0" stroke-width="1"/><circle cx="1477.4" cy="73.7" r="1.9" fill="#fff" stroke="#6092c0" stroke-width="1"/><circle cx="1485.0" cy="40.0" r="1.9" fill="#fff" stroke="#6092c0" stroke-width="1"/></g><g opacity="1" clip-path="url(#c4)"><path d="M1505.0,40.0C1507.0,56.6 1508.9,73.1 1510.9,79.3C1517.7,100.6 1524.4,111.2 1531.2,111.2C1531.8,111.2 1532.4,75.6 1533.0,40.0" fill="none" stroke="#54b399" stroke-width="1.1" stroke-linejoin="round"/><circle cx="1505.0" cy="40.0" r="1.9" fill="#fff" stroke="#54b399" stroke-width="1"/><circle cx="1510.9" cy="79.3" r="1.9" fill="#fff" stroke="#54b399" stroke-width="1"/><circle cx="1531.2" cy="111.2" r="1.9" fill="#fff" stroke="#54b399" stroke-width="1"/><circle cx="1533.0" cy="40.0" r="1.9" fill="#fff" stroke="#54b399" stroke-width="1"/></g><g opacity="1" clip-path="url(#c4)"><path d="M1524.0,40.0C1526.6,64.9 1529.3,89.8 1531.9,89.8C1532.6,89.8 1533.3,64.9 1534.0,40.0" fill="none" stroke="#6092c0" stroke-width="1.1" stroke-linejoin="round"/><circle cx="1524.0" cy="40.0" r="1.9" fill="#fff" stroke="#6092c0" stroke-width="1"/><circle cx="1531.9" cy="89.8" r="1.9" fill="#fff" stroke="#6092c0" stroke-width="1"/><circle cx="1534.0" cy="40.0" r="1.9" fill="#fff" stroke="#6092c0" stroke-width="1"/></g><g opacity="1" clip-path="url(#c4)"><path d="M1563.0,40.0C1564.5,58.6 1565.9,77.2 1567.4,77.2C1568.3,77.2 1569.1,58.6 1570.0,40.0" fill="none" stroke="#6092c0" stroke-width="1.1" stroke-linejoin="round"/><circle cx="1563.0" cy="40.0" r="1.9" fill="#fff" stroke="#6092c0" stroke-width="1"/><circle cx="1567.4" cy="77.2" r="1.9" fill="#fff" stroke="#6092c0" stroke-width="1"/><circle cx="1570.0" cy="40.0" r="1.9" fill="#fff" stroke="#6092c0" stroke-width="1"/></g><g opacity="1"><path d="M1305.3,125.0L1316.6,125.0L1327.9,125.0L1339.3,125.0L1350.6,125.0L1361.9,125.0L1373.3,125.0L1384.6,125.0L1396.0,125.0L1407.3,125.0L1418.6,125.0L1430.0,125.0L1441.3,125.0L1452.7,125.0L1464.0,125.0L1472.5,125.0L1483.8,125.0L1498.0,125.0L1509.4,125.0L1515.0,125.0L1532.0,125.0L1543.4,125.0L1554.7,125.0L1566.0,125.0" fill="none" stroke="#d36086" stroke-width="1.1" stroke-linejoin="round"/><circle cx="1305.3" cy="125.0" r="1.9" fill="#fff" stroke="#d36086" stroke-width="1"/><circle cx="1316.6" cy="125.0" r="1.9" fill="#fff" stroke="#d36086" stroke-width="1"/><circle cx="1327.9" cy="125.0" r="1.9" fill="#fff" stroke="#d36086" stroke-width="1"/><circle cx="1339.3" cy="125.0" r="1.9" fill="#fff" stroke="#d36086" stroke-width="1"/><circle cx="1350.6" cy="125.0" r="1.9" fill="#fff" stroke="#d36086" stroke-width="1"/><circle cx="1361.9" cy="125.0" r="1.9" fill="#fff" stroke="#d36086" stroke-width="1"/><circle cx="1373.3" cy="125.0" r="1.9" fill="#fff" stroke="#d36086" stroke-width="1"/><circle cx="1384.6" cy="125.0" r="1.9" fill="#fff" stroke="#d36086" stroke-width="1"/><circle cx="1396.0" cy="125.0" r="1.9" fill="#fff" stroke="#d36086" stroke-width="1"/><circle cx="1407.3" cy="125.0" r="1.9" fill="#fff" stroke="#d36086" stroke-width="1"/><circle cx="1418.6" cy="125.0" r="1.9" fill="#fff" stroke="#d36086" stroke-width="1"/><circle cx="1430.0" cy="125.0" r="1.9" fill="#fff" stroke="#d36086" stroke-width="1"/><circle cx="1441.3" cy="125.0" r="1.9" fill="#fff" stroke="#d36086" stroke-width="1"/><circle cx="1452.7" cy="125.0" r="1.9" fill="#fff" stroke="#d36086" stroke-width="1"/><circle cx="1464.0" cy="125.0" r="1.9" fill="#fff" stroke="#d36086" stroke-width="1"/><circle cx="1472.5" cy="125.0" r="1.9" fill="#fff" stroke="#d36086" stroke-width="1"/><circle cx="1483.8" cy="125.0" r="1.9" fill="#fff" stroke="#d36086" stroke-width="1"/><circle cx="1498.0" cy="125.0" r="1.9" fill="#fff" stroke="#d36086" stroke-width="1"/><circle cx="1509.4" cy="125.0" r="1.9" fill="#fff" stroke="#d36086" stroke-width="1"/><circle cx="1515.0" cy="125.0" r="1.9" fill="#fff" stroke="#d36086" stroke-width="1"/><circle cx="1532.0" cy="125.0" r="1.9" fill="#fff" stroke="#d36086" stroke-width="1"/><circle cx="1543.4" cy="125.0" r="1.9" fill="#fff" stroke="#d36086" stroke-width="1"/><circle cx="1554.7" cy="125.0" r="1.9" fill="#fff" stroke="#d36086" stroke-width="1"/><circle cx="1566.0" cy="125.0" r="1.9" fill="#fff" stroke="#d36086" stroke-width="1"/></g><line x1="284.8" y1="364.4" x2="284.8" y2="653" stroke="#eceff4"/><line x1="358.3" y1="364.4" x2="358.3" y2="653" stroke="#eceff4"/><line x1="430.0" y1="364.4" x2="430.0" y2="653" stroke="#eceff4"/><line x1="502.5" y1="364.4" x2="502.5" y2="653" stroke="#eceff4"/><line x1="244.3" y1="364.5" x2="534.0" y2="364.5" stroke="#e1e4e9" stroke-dasharray="4,2"/><text x="231.5" y="364.4" text-anchor="end" font-size="8.8" fill="#343741" font-weight="normal" dy="0.34em">8.0</text><line x1="244.3" y1="405.5" x2="534.0" y2="405.5" stroke="#e1e4e9" stroke-dasharray="4,2"/><text x="231.5" y="405.7" text-anchor="end" font-size="8.8" fill="#343741" font-weight="normal" dy="0.34em">7.0</text><line x1="244.3" y1="446.5" x2="534.0" y2="446.5" stroke="#e1e4e9" stroke-dasharray="4,2"/><text x="231.5" y="446.9" text-anchor="end" font-size="8.8" fill="#343741" font-weight="normal" dy="0.34em">6.0</text><line x1="244.3" y1="488.5" x2="534.0" y2="488.5" stroke="#e1e4e9" stroke-dasharray="4,2"/><text x="231.5" y="488.1" text-anchor="end" font-size="8.8" fill="#343741" font-weight="normal" dy="0.34em">5.0</text><line x1="244.3" y1="529.5" x2="534.0" y2="529.5" stroke="#e1e4e9" stroke-dasharray="4,2"/><text x="231.5" y="529.4" text-anchor="end" font-size="8.8" fill="#343741" font-weight="normal" dy="0.34em">4.0</text><line x1="244.3" y1="570.5" x2="534.0" y2="570.5" stroke="#e1e4e9" stroke-dasharray="4,2"/><text x="231.5" y="570.6" text-anchor="end" font-size="8.8" fill="#343741" font-weight="normal" dy="0.34em">3.0</text><line x1="244.3" y1="611.5" x2="534.0" y2="611.5" stroke="#e1e4e9" stroke-dasharray="4,2"/><text x="231.5" y="611.9" text-anchor="end" font-size="8.8" fill="#343741" font-weight="normal" dy="0.34em">2.0</text><line x1="244.3" y1="653.5" x2="534.0" y2="653.5" stroke="#e1e4e9" stroke-dasharray="4,2"/><text x="231.5" y="653.1" text-anchor="end" font-size="8.8" fill="#343741" font-weight="normal" dy="0.34em">1.0</text><line x1="472.5" y1="364.4" x2="472.5" y2="653" stroke="#bccbdc" stroke-dasharray="6,3"/><line x1="284.8" y1="653" x2="284.8" y2="661" stroke="#535966"/><text x="284.8" y="671.0" text-anchor="middle" font-size="8.8" fill="#343741" font-weight="normal" dy="0.34em">3. Sep</text><line x1="358.3" y1="653" x2="358.3" y2="661" stroke="#535966"/><text x="358.3" y="671.0" text-anchor="middle" font-size="8.8" fill="#343741" font-weight="normal" dy="0.34em">12:00 pm</text><line x1="430.0" y1="653" x2="430.0" y2="661" stroke="#535966"/><text x="430.0" y="671.0" text-anchor="middle" font-size="8.8" fill="#343741" font-weight="normal" dy="0.34em">4. Sep</text><line x1="502.5" y1="653" x2="502.5" y2="661" stroke="#535966"/><text x="502.5" y="671.0" text-anchor="middle" font-size="8.8" fill="#343741" font-weight="normal" dy="0.34em">12:00 pm</text><g opacity="1" clip-path="url(#cl)"><path d="M244.3,542.3C247.7,560.4 251.1,578.4 254.4,584.3C258.5,591.3 262.5,594.8 266.6,594.8C270.6,594.8 274.6,426.0 278.6,426.0C282.7,426.0 286.7,549.5 290.8,554.7C294.8,559.9 298.8,558.6 302.8,562.5C306.9,566.4 310.9,578.0 314.9,578.0C319.0,578.0 323.0,534.5 327.1,534.5C331.1,534.5 335.1,543.0 339.1,559.8C343.2,576.6 347.2,635.6 351.2,635.6C355.3,635.6 359.3,631.4 363.4,624.7C367.4,618.0 371.4,603.2 375.4,595.6C379.5,588.0 383.5,585.1 387.6,579.2C391.6,573.4 395.6,560.5 399.6,560.5C403.7,560.5 407.7,584.3 411.8,584.3C415.8,584.3 419.8,583.3 423.9,581.2C427.9,579.1 431.9,451.4 435.9,451.4C440.0,451.4 444.0,574.6 448.1,595.6C452.1,616.6 456.1,627.1 460.1,627.1C464.2,627.1 468.2,560.3 472.2,538.4C476.3,516.5 480.3,495.6 484.4,495.6C488.4,495.6 492.4,632.5 496.4,632.5C500.5,632.5 504.5,615.6 508.6,610.4C512.6,605.2 516.6,601.4 520.6,601.4C524.7,601.4 528.7,602.5 532.8,603.7" fill="none" stroke="#54b399" stroke-width="1.1" stroke-linejoin="round"/><circle cx="254.4" cy="584.3" r="1.9" fill="#fff" stroke="#54b399" stroke-width="1"/><circle cx="266.6" cy="594.8" r="1.9" fill="#fff" stroke="#54b399" stroke-width="1"/><circle cx="278.6" cy="426.0" r="1.9" fill="#fff" stroke="#54b399" stroke-width="1"/><circle cx="290.8" cy="554.7" r="1.9" fill="#fff" stroke="#54b399" stroke-width="1"/><circle cx="302.8" cy="562.5" r="1.9" fill="#fff" stroke="#54b399" stroke-width="1"/><circle cx="314.9" cy="578.0" r="1.9" fill="#fff" stroke="#54b399" stroke-width="1"/><circle cx="327.1" cy="534.5" r="1.9" fill="#fff" stroke="#54b399" stroke-width="1"/><circle cx="339.1" cy="559.8" r="1.9" fill="#fff" stroke="#54b399" stroke-width="1"/><circle cx="351.2" cy="635.6" r="1.9" fill="#fff" stroke="#54b399" stroke-width="1"/><circle cx="363.4" cy="624.7" r="1.9" fill="#fff" stroke="#54b399" stroke-width="1"/><circle cx="375.4" cy="595.6" r="1.9" fill="#fff" stroke="#54b399" stroke-width="1"/><circle cx="387.6" cy="579.2" r="1.9" fill="#fff" stroke="#54b399" stroke-width="1"/><circle cx="399.6" cy="560.5" r="1.9" fill="#fff" stroke="#54b399" stroke-width="1"/><circle cx="411.8" cy="584.3" r="1.9" fill="#fff" stroke="#54b399" stroke-width="1"/><circle cx="423.9" cy="581.2" r="1.9" fill="#fff" stroke="#54b399" stroke-width="1"/><circle cx="435.9" cy="451.4" r="1.9" fill="#fff" stroke="#54b399" stroke-width="1"/><circle cx="448.1" cy="595.6" r="1.9" fill="#fff" stroke="#54b399" stroke-width="1"/><circle cx="460.1" cy="627.1" r="1.9" fill="#fff" stroke="#54b399" stroke-width="1"/><circle cx="472.2" cy="538.4" r="1.9" fill="#fff" stroke="#54b399" stroke-width="1"/><circle cx="484.4" cy="495.6" r="1.9" fill="#fff" stroke="#54b399" stroke-width="1"/><circle cx="496.4" cy="632.5" r="1.9" fill="#fff" stroke="#54b399" stroke-width="1"/><circle cx="508.6" cy="610.4" r="1.9" fill="#fff" stroke="#54b399" stroke-width="1"/><circle cx="520.6" cy="601.4" r="1.9" fill="#fff" stroke="#54b399" stroke-width="1"/><circle cx="532.8" cy="603.7" r="1.9" fill="#fff" stroke="#54b399" stroke-width="1"/></g><g opacity="1" clip-path="url(#cl)"><path d="M244.3,517.0C247.7,540.9 251.1,564.8 254.4,564.8C258.5,564.8 262.5,563.7 266.6,563.7C270.6,563.7 274.6,571.4 278.6,571.4C282.7,571.4 286.7,559.6 290.8,548.1C294.8,536.6 298.8,502.2 302.8,502.2C306.9,502.2 310.9,556.7 314.9,556.7C319.0,556.7 323.0,466.2 327.1,462.3C331.1,458.4 335.1,456.5 339.1,456.5C343.2,456.5 347.2,528.2 351.2,550.0C355.3,571.8 359.3,587.0 363.4,587.0C367.4,587.0 371.4,560.1 375.4,552.0C379.5,543.9 383.5,542.5 387.6,538.4C391.6,534.3 395.6,527.5 399.6,527.5C403.7,527.5 407.7,572.6 411.8,572.6C415.8,572.6 419.8,569.0 423.9,561.7C427.9,554.4 431.9,377.6 435.9,377.6C440.0,377.6 444.0,590.9 448.1,590.9C452.1,590.9 456.1,584.0 460.1,570.3C464.2,556.6 468.2,453.5 472.2,426.0C476.3,398.5 480.3,384.7 484.4,384.7C488.4,384.7 492.4,522.1 496.4,549.3C500.5,576.5 504.5,590.1 508.6,590.1C512.6,590.1 516.6,585.9 520.6,584.3C524.7,582.7 528.7,581.5 532.8,580.4" fill="none" stroke="#6092c0" stroke-width="1.1" stroke-linejoin="round"/><circle cx="254.4" cy="564.8" r="1.9" fill="#fff" stroke="#6092c0" stroke-width="1"/><circle cx="266.6" cy="563.7" r="1.9" fill="#fff" stroke="#6092c0" stroke-width="1"/><circle cx="278.6" cy="571.4" r="1.9" fill="#fff" stroke="#6092c0" stroke-width="1"/><circle cx="290.8" cy="548.1" r="1.9" fill="#fff" stroke="#6092c0" stroke-width="1"/><circle cx="302.8" cy="502.2" r="1.9" fill="#fff" stroke="#6092c0" stroke-width="1"/><circle cx="314.9" cy="556.7" r="1.9" fill="#fff" stroke="#6092c0" stroke-width="1"/><circle cx="327.1" cy="462.3" r="1.9" fill="#fff" stroke="#6092c0" stroke-width="1"/><circle cx="339.1" cy="456.5" r="1.9" fill="#fff" stroke="#6092c0" stroke-width="1"/><circle cx="351.2" cy="550.0" r="1.9" fill="#fff" stroke="#6092c0" stroke-width="1"/><circle cx="363.4" cy="587.0" r="1.9" fill="#fff" stroke="#6092c0" stroke-width="1"/><circle cx="375.4" cy="552.0" r="1.9" fill="#fff" stroke="#6092c0" stroke-width="1"/><circle cx="387.6" cy="538.4" r="1.9" fill="#fff" stroke="#6092c0" stroke-width="1"/><circle cx="399.6" cy="527.5" r="1.9" fill="#fff" stroke="#6092c0" stroke-width="1"/><circle cx="411.8" cy="572.6" r="1.9" fill="#fff" stroke="#6092c0" stroke-width="1"/><circle cx="423.9" cy="561.7" r="1.9" fill="#fff" stroke="#6092c0" stroke-width="1"/><circle cx="435.9" cy="377.6" r="1.9" fill="#fff" stroke="#6092c0" stroke-width="1"/><circle cx="448.1" cy="590.9" r="1.9" fill="#fff" stroke="#6092c0" stroke-width="1"/><circle cx="460.1" cy="570.3" r="1.9" fill="#fff" stroke="#6092c0" stroke-width="1"/><circle cx="472.2" cy="426.0" r="1.9" fill="#fff" stroke="#6092c0" stroke-width="1"/><circle cx="484.4" cy="384.7" r="1.9" fill="#fff" stroke="#6092c0" stroke-width="1"/><circle cx="496.4" cy="549.3" r="1.9" fill="#fff" stroke="#6092c0" stroke-width="1"/><circle cx="508.6" cy="590.1" r="1.9" fill="#fff" stroke="#6092c0" stroke-width="1"/><circle cx="520.6" cy="584.3" r="1.9" fill="#fff" stroke="#6092c0" stroke-width="1"/><circle cx="532.8" cy="580.4" r="1.9" fill="#fff" stroke="#6092c0" stroke-width="1"/></g><g opacity="1" clip-path="url(#cl)"><path d="M244.3,511.0C247.7,516.9 251.1,522.8 254.4,522.8C258.5,522.8 262.5,502.2 266.6,502.2C270.6,502.2 274.6,510.4 278.6,510.4C282.7,510.4 286.7,488.3 290.8,485.8C294.8,483.3 298.8,482.0 302.8,482.0C306.9,482.0 310.9,514.2 314.9,514.2C319.0,514.2 323.0,492.8 327.1,492.8C331.1,492.8 335.1,496.3 339.1,496.3C343.2,496.3 347.2,494.8 351.2,494.8C355.3,494.8 359.3,522.0 363.4,522.0C367.4,522.0 371.4,512.3 375.4,512.3C379.5,512.3 383.5,530.6 387.6,530.6C391.6,530.6 395.6,500.6 399.6,500.6C403.7,500.6 407.7,501.3 411.8,502.6C415.8,503.9 419.8,520.9 423.9,520.9C427.9,520.9 431.9,509.2 435.9,509.2C440.0,509.2 444.0,514.9 448.1,517.0C452.1,519.1 456.1,522.0 460.1,522.0C464.2,522.0 468.2,511.3 472.2,508.4C476.3,505.5 480.3,504.1 484.4,504.1C488.4,504.1 492.4,524.7 496.4,524.7C500.5,524.7 504.5,496.3 508.6,496.3C512.6,496.3 516.6,508.5 520.6,514.2C524.7,519.9 528.7,525.3 532.8,530.6" fill="none" stroke="#d36086" stroke-width="1.1" stroke-linejoin="round"/><circle cx="254.4" cy="522.8" r="1.9" fill="#fff" stroke="#d36086" stroke-width="1"/><circle cx="266.6" cy="502.2" r="1.9" fill="#fff" stroke="#d36086" stroke-width="1"/><circle cx="278.6" cy="510.4" r="1.9" fill="#fff" stroke="#d36086" stroke-width="1"/><circle cx="290.8" cy="485.8" r="1.9" fill="#fff" stroke="#d36086" stroke-width="1"/><circle cx="302.8" cy="482.0" r="1.9" fill="#fff" stroke="#d36086" stroke-width="1"/><circle cx="314.9" cy="514.2" r="1.9" fill="#fff" stroke="#d36086" stroke-width="1"/><circle cx="327.1" cy="492.8" r="1.9" fill="#fff" stroke="#d36086" stroke-width="1"/><circle cx="339.1" cy="496.3" r="1.9" fill="#fff" stroke="#d36086" stroke-width="1"/><circle cx="351.2" cy="494.8" r="1.9" fill="#fff" stroke="#d36086" stroke-width="1"/><circle cx="363.4" cy="522.0" r="1.9" fill="#fff" stroke="#d36086" stroke-width="1"/><circle cx="375.4" cy="512.3" r="1.9" fill="#fff" stroke="#d36086" stroke-width="1"/><circle cx="387.6" cy="530.6" r="1.9" fill="#fff" stroke="#d36086" stroke-width="1"/><circle cx="399.6" cy="500.6" r="1.9" fill="#fff" stroke="#d36086" stroke-width="1"/><circle cx="411.8" cy="502.6" r="1.9" fill="#fff" stroke="#d36086" stroke-width="1"/><circle cx="423.9" cy="520.9" r="1.9" fill="#fff" stroke="#d36086" stroke-width="1"/><circle cx="435.9" cy="509.2" r="1.9" fill="#fff" stroke="#d36086" stroke-width="1"/><circle cx="448.1" cy="517.0" r="1.9" fill="#fff" stroke="#d36086" stroke-width="1"/><circle cx="460.1" cy="522.0" r="1.9" fill="#fff" stroke="#d36086" stroke-width="1"/><circle cx="472.2" cy="508.4" r="1.9" fill="#fff" stroke="#d36086" stroke-width="1"/><circle cx="484.4" cy="504.1" r="1.9" fill="#fff" stroke="#d36086" stroke-width="1"/><circle cx="496.4" cy="524.7" r="1.9" fill="#fff" stroke="#d36086" stroke-width="1"/><circle cx="508.6" cy="496.3" r="1.9" fill="#fff" stroke="#d36086" stroke-width="1"/><circle cx="520.6" cy="514.2" r="1.9" fill="#fff" stroke="#d36086" stroke-width="1"/><circle cx="532.8" cy="530.6" r="1.9" fill="#fff" stroke="#d36086" stroke-width="1"/></g><line x1="645.5" y1="364.4" x2="645.5" y2="652.5" stroke="#eceff4"/><line x1="713.4" y1="364.4" x2="713.4" y2="652.5" stroke="#eceff4"/><line x1="781.4" y1="364.4" x2="781.4" y2="652.5" stroke="#eceff4"/><line x1="849.3" y1="364.4" x2="849.3" y2="652.5" stroke="#eceff4"/><line x1="607.0" y1="364.5" x2="879.0" y2="364.5" stroke="#e1e4e9" stroke-dasharray="4,2"/><text x="594.5" y="364.4" text-anchor="end" font-size="8.8" fill="#343741" font-weight="normal" dy="0.34em">100.0%</text><line x1="607.0" y1="422.5" x2="879.0" y2="422.5" stroke="#e1e4e9" stroke-dasharray="4,2"/><text x="594.5" y="422.0" text-anchor="end" font-size="8.8" fill="#343741" font-weight="normal" dy="0.34em">80.0%</text><line x1="607.0" y1="479.5" x2="879.0" y2="479.5" stroke="#e1e4e9" stroke-dasharray="4,2"/><text x="594.5" y="479.6" text-anchor="end" font-size="8.8" fill="#343741" font-weight="normal" dy="0.34em">60.0%</text><line x1="607.0" y1="537.5" x2="879.0" y2="537.5" stroke="#e1e4e9" stroke-dasharray="4,2"/><text x="594.5" y="537.3" text-anchor="end" font-size="8.8" fill="#343741" font-weight="normal" dy="0.34em">40.0%</text><line x1="607.0" y1="594.5" x2="879.0" y2="594.5" stroke="#e1e4e9" stroke-dasharray="4,2"/><text x="594.5" y="594.9" text-anchor="end" font-size="8.8" fill="#343741" font-weight="normal" dy="0.34em">20.0%</text><line x1="607.0" y1="652.5" x2="879.0" y2="652.5" stroke="#e1e4e9" stroke-dasharray="4,2"/><text x="594.5" y="652.5" text-anchor="end" font-size="8.8" fill="#343741" font-weight="normal" dy="0.34em">0.0%</text><line x1="820.6" y1="364.4" x2="820.6" y2="652.5" stroke="#bccbdc" stroke-dasharray="6,3"/><line x1="645.5" y1="652.5" x2="645.5" y2="660.5" stroke="#535966"/><text x="645.5" y="670.4" text-anchor="middle" font-size="8.8" fill="#343741" font-weight="normal" dy="0.34em">3. Sep</text><line x1="713.4" y1="652.5" x2="713.4" y2="660.5" stroke="#535966"/><text x="713.4" y="670.4" text-anchor="middle" font-size="8.8" fill="#343741" font-weight="normal" dy="0.34em">12:00 pm</text><line x1="781.4" y1="652.5" x2="781.4" y2="660.5" stroke="#535966"/><text x="781.4" y="670.4" text-anchor="middle" font-size="8.8" fill="#343741" font-weight="normal" dy="0.34em">4. Sep</text><line x1="849.3" y1="652.5" x2="849.3" y2="660.5" stroke="#535966"/><text x="849.3" y="670.4" text-anchor="middle" font-size="8.8" fill="#343741" font-weight="normal" dy="0.34em">12:00 pm</text><g opacity="0.9" clip-path="url(#cc)"><path d="M605.9,618.0C609.6,629.2 613.4,640.5 617.2,640.5C621.0,640.5 624.7,638.8 628.5,638.5C632.3,638.2 636.1,638.3 639.8,638.0C643.6,637.7 647.4,626.0 651.2,626.0C654.9,626.0 658.7,626.0 662.5,626.0C666.3,626.0 670.0,637.0 673.8,637.0C677.6,637.0 681.4,535.0 685.1,535.0C688.9,535.0 692.7,541.9 696.5,555.7C700.2,569.5 704.0,627.7 707.8,633.0C711.5,638.3 715.3,641.0 719.1,641.0C722.9,641.0 726.6,640.0 730.4,638.0C734.2,636.0 738.0,628.2 741.7,625.5C745.5,622.8 749.3,623.0 753.1,621.5C756.8,620.0 760.6,616.5 764.4,616.5C768.2,616.5 771.9,625.5 775.7,625.5C779.5,625.5 783.3,606.0 787.0,606.0C790.8,606.0 794.6,639.0 798.3,639.0C802.1,639.0 805.9,638.0 809.7,636.0C813.4,634.0 817.2,551.3 821.0,534.0C824.8,516.7 828.5,508.0 832.3,508.0C836.1,508.0 839.9,635.3 843.6,638.0C847.4,640.7 851.2,642.0 855.0,642.0C858.7,642.0 862.5,636.5 866.3,635.5C870.1,634.5 873.8,634.2 877.6,634.0" fill="none" stroke="#c9ced6" stroke-width="1.1" stroke-linejoin="round"/><circle cx="617.2" cy="640.5" r="1.9" fill="#fff" stroke="#c9ced6" stroke-width="1"/><circle cx="628.5" cy="638.5" r="1.9" fill="#fff" stroke="#c9ced6" stroke-width="1"/><circle cx="639.8" cy="638.0" r="1.9" fill="#fff" stroke="#c9ced6" stroke-width="1"/><circle cx="651.2" cy="626.0" r="1.9" fill="#fff" stroke="#c9ced6" stroke-width="1"/><circle cx="662.5" cy="626.0" r="1.9" fill="#fff" stroke="#c9ced6" stroke-width="1"/><circle cx="673.8" cy="637.0" r="1.9" fill="#fff" stroke="#c9ced6" stroke-width="1"/><circle cx="685.1" cy="535.0" r="1.9" fill="#fff" stroke="#c9ced6" stroke-width="1"/><circle cx="696.5" cy="555.7" r="1.9" fill="#fff" stroke="#c9ced6" stroke-width="1"/><circle cx="707.8" cy="633.0" r="1.9" fill="#fff" stroke="#c9ced6" stroke-width="1"/><circle cx="719.1" cy="641.0" r="1.9" fill="#fff" stroke="#c9ced6" stroke-width="1"/><circle cx="730.4" cy="638.0" r="1.9" fill="#fff" stroke="#c9ced6" stroke-width="1"/><circle cx="741.7" cy="625.5" r="1.9" fill="#fff" stroke="#c9ced6" stroke-width="1"/><circle cx="753.1" cy="621.5" r="1.9" fill="#fff" stroke="#c9ced6" stroke-width="1"/><circle cx="764.4" cy="616.5" r="1.9" fill="#fff" stroke="#c9ced6" stroke-width="1"/><circle cx="775.7" cy="625.5" r="1.9" fill="#fff" stroke="#c9ced6" stroke-width="1"/><circle cx="787.0" cy="606.0" r="1.9" fill="#fff" stroke="#c9ced6" stroke-width="1"/><circle cx="798.3" cy="639.0" r="1.9" fill="#fff" stroke="#c9ced6" stroke-width="1"/><circle cx="809.7" cy="636.0" r="1.9" fill="#fff" stroke="#c9ced6" stroke-width="1"/><circle cx="821.0" cy="534.0" r="1.9" fill="#fff" stroke="#c9ced6" stroke-width="1"/><circle cx="832.3" cy="508.0" r="1.9" fill="#fff" stroke="#c9ced6" stroke-width="1"/><circle cx="843.6" cy="638.0" r="1.9" fill="#fff" stroke="#c9ced6" stroke-width="1"/><circle cx="855.0" cy="642.0" r="1.9" fill="#fff" stroke="#c9ced6" stroke-width="1"/><circle cx="866.3" cy="635.5" r="1.9" fill="#fff" stroke="#c9ced6" stroke-width="1"/><circle cx="877.6" cy="634.0" r="1.9" fill="#fff" stroke="#c9ced6" stroke-width="1"/></g><g opacity="1" clip-path="url(#cc)"><path d="M605.9,652.5C609.6,652.5 613.4,652.5 617.2,652.5C621.0,652.5 624.7,652.5 628.5,652.5C632.3,652.5 636.1,652.5 639.8,652.5C643.6,652.5 647.4,652.5 651.2,652.5C654.9,652.5 658.7,652.5 662.5,652.5C666.3,652.5 670.0,652.5 673.8,652.5C677.6,652.5 681.4,652.5 685.1,652.5C688.9,652.5 692.7,652.5 696.5,652.5C700.2,652.5 704.0,652.5 707.8,652.5C711.5,652.5 715.3,652.5 719.1,652.5C722.9,652.5 726.6,652.5 730.4,652.5C734.2,652.5 738.0,652.5 741.7,652.5C745.5,652.5 749.3,652.5 753.1,652.5C756.8,652.5 760.6,652.5 764.4,652.5C768.2,652.5 771.9,652.5 775.7,652.5C779.5,652.5 783.3,652.5 787.0,652.5C790.8,652.5 794.6,652.5 798.3,652.5C802.1,652.5 805.9,652.5 809.7,652.5C813.4,652.5 817.2,652.5 821.0,652.5C824.8,652.5 828.5,652.5 832.3,652.5C836.1,652.5 839.9,652.5 843.6,652.5C847.4,652.5 851.2,652.5 855.0,652.5C858.7,652.5 862.5,652.5 866.3,652.5C870.1,652.5 873.8,652.5 877.6,652.5" fill="none" stroke="#f0c9d6" stroke-width="1" stroke-linejoin="round"/><circle cx="617.2" cy="652.5" r="1.9" fill="#fff" stroke="#f0c9d6" stroke-width="1"/><circle cx="628.5" cy="652.5" r="1.9" fill="#fff" stroke="#f0c9d6" stroke-width="1"/><circle cx="639.8" cy="652.5" r="1.9" fill="#fff" stroke="#f0c9d6" stroke-width="1"/><circle cx="651.2" cy="652.5" r="1.9" fill="#fff" stroke="#f0c9d6" stroke-width="1"/><circle cx="662.5" cy="652.5" r="1.9" fill="#fff" stroke="#f0c9d6" stroke-width="1"/><circle cx="673.8" cy="652.5" r="1.9" fill="#fff" stroke="#f0c9d6" stroke-width="1"/><circle cx="685.1" cy="652.5" r="1.9" fill="#fff" stroke="#f0c9d6" stroke-width="1"/><circle cx="696.5" cy="652.5" r="1.9" fill="#fff" stroke="#f0c9d6" stroke-width="1"/><circle cx="707.8" cy="652.5" r="1.9" fill="#fff" stroke="#f0c9d6" stroke-width="1"/><circle cx="719.1" cy="652.5" r="1.9" fill="#fff" stroke="#f0c9d6" stroke-width="1"/><circle cx="730.4" cy="652.5" r="1.9" fill="#fff" stroke="#f0c9d6" stroke-width="1"/><circle cx="741.7" cy="652.5" r="1.9" fill="#fff" stroke="#f0c9d6" stroke-width="1"/><circle cx="753.1" cy="652.5" r="1.9" fill="#fff" stroke="#f0c9d6" stroke-width="1"/><circle cx="764.4" cy="652.5" r="1.9" fill="#fff" stroke="#f0c9d6" stroke-width="1"/><circle cx="775.7" cy="652.5" r="1.9" fill="#fff" stroke="#f0c9d6" stroke-width="1"/><circle cx="787.0" cy="652.5" r="1.9" fill="#fff" stroke="#f0c9d6" stroke-width="1"/><circle cx="798.3" cy="652.5" r="1.9" fill="#fff" stroke="#f0c9d6" stroke-width="1"/><circle cx="809.7" cy="652.5" r="1.9" fill="#fff" stroke="#f0c9d6" stroke-width="1"/><circle cx="821.0" cy="652.5" r="1.9" fill="#fff" stroke="#f0c9d6" stroke-width="1"/><circle cx="832.3" cy="652.5" r="1.9" fill="#fff" stroke="#f0c9d6" stroke-width="1"/><circle cx="843.6" cy="652.5" r="1.9" fill="#fff" stroke="#f0c9d6" stroke-width="1"/><circle cx="855.0" cy="652.5" r="1.9" fill="#fff" stroke="#f0c9d6" stroke-width="1"/><circle cx="866.3" cy="652.5" r="1.9" fill="#fff" stroke="#f0c9d6" stroke-width="1"/><circle cx="877.6" cy="652.5" r="1.9" fill="#fff" stroke="#f0c9d6" stroke-width="1"/></g><g opacity="1" clip-path="url(#cc)"><path d="M605.9,612.0C609.6,625.1 613.4,638.2 617.2,638.2C621.0,638.2 624.7,636.5 628.5,636.1C632.3,635.7 636.1,635.9 639.8,635.5C643.6,635.1 647.4,623.0 651.2,623.0C654.9,623.0 658.7,623.0 662.5,623.0C666.3,623.0 670.0,633.6 673.8,633.6C677.6,633.6 681.4,523.6 685.1,523.6C688.9,523.6 692.7,529.9 696.5,542.6C700.2,555.3 704.0,624.5 707.8,630.2C711.5,635.9 715.3,638.7 719.1,638.7C722.9,638.7 726.6,637.7 730.4,635.7C734.2,633.7 738.0,625.0 741.7,622.5C745.5,620.0 749.3,620.2 753.1,618.7C756.8,617.2 760.6,613.2 764.4,613.2C768.2,613.2 771.9,622.3 775.7,622.3C779.5,622.3 783.3,601.7 787.0,601.7C790.8,601.7 794.6,636.1 798.3,636.1C802.1,636.1 805.9,634.9 809.7,632.5C813.4,630.1 817.2,525.7 821.0,513.8C824.8,501.9 828.5,496.0 832.3,496.0C836.1,496.0 839.9,631.9 843.6,635.0C847.4,638.1 851.2,639.7 855.0,639.7C858.7,639.7 862.5,634.7 866.3,632.5C870.1,630.3 873.8,628.5 877.6,626.6" fill="none" stroke="#6092c0" stroke-width="2" stroke-linejoin="round"/><circle cx="617.2" cy="638.2" r="1.9" fill="#fff" stroke="#6092c0" stroke-width="1"/><circle cx="628.5" cy="636.1" r="1.9" fill="#fff" stroke="#6092c0" stroke-width="1"/><circle cx="639.8" cy="635.5" r="1.9" fill="#fff" stroke="#6092c0" stroke-width="1"/><circle cx="651.2" cy="623.0" r="1.9" fill="#fff" stroke="#6092c0" stroke-width="1"/><circle cx="662.5" cy="623.0" r="1.9" fill="#fff" stroke="#6092c0" stroke-width="1"/><circle cx="673.8" cy="633.6" r="1.9" fill="#fff" stroke="#6092c0" stroke-width="1"/><circle cx="685.1" cy="523.6" r="1.9" fill="#fff" stroke="#6092c0" stroke-width="1"/><circle cx="696.5" cy="542.6" r="1.9" fill="#fff" stroke="#6092c0" stroke-width="1"/><circle cx="707.8" cy="630.2" r="1.9" fill="#fff" stroke="#6092c0" stroke-width="1"/><circle cx="719.1" cy="638.7" r="1.9" fill="#fff" stroke="#6092c0" stroke-width="1"/><circle cx="730.4" cy="635.7" r="1.9" fill="#fff" stroke="#6092c0" stroke-width="1"/><circle cx="741.7" cy="622.5" r="1.9" fill="#fff" stroke="#6092c0" stroke-width="1"/><circle cx="753.1" cy="618.7" r="1.9" fill="#fff" stroke="#6092c0" stroke-width="1"/><circle cx="764.4" cy="613.2" r="1.9" fill="#fff" stroke="#6092c0" stroke-width="1"/><circle cx="775.7" cy="622.3" r="1.9" fill="#fff" stroke="#6092c0" stroke-width="1"/><circle cx="787.0" cy="601.7" r="1.9" fill="#fff" stroke="#6092c0" stroke-width="1"/><circle cx="798.3" cy="636.1" r="1.9" fill="#fff" stroke="#6092c0" stroke-width="1"/><circle cx="809.7" cy="632.5" r="1.9" fill="#fff" stroke="#6092c0" stroke-width="1"/><circle cx="821.0" cy="513.8" r="1.9" fill="#fff" stroke="#6092c0" stroke-width="1"/><circle cx="832.3" cy="496.0" r="1.9" fill="#fff" stroke="#6092c0" stroke-width="1"/><circle cx="843.6" cy="635.0" r="1.9" fill="#fff" stroke="#6092c0" stroke-width="1"/><circle cx="855.0" cy="639.7" r="1.9" fill="#fff" stroke="#6092c0" stroke-width="1"/><circle cx="866.3" cy="632.5" r="1.9" fill="#fff" stroke="#6092c0" stroke-width="1"/><circle cx="877.6" cy="626.6" r="1.9" fill="#fff" stroke="#6092c0" stroke-width="1"/></g><line x1="996.6" y1="364.4" x2="996.6" y2="597.8" stroke="#eceff4"/><line x1="1062.6" y1="364.4" x2="1062.6" y2="597.8" stroke="#eceff4"/><line x1="1128.6" y1="364.4" x2="1128.6" y2="597.8" stroke="#eceff4"/><line x1="1194.6" y1="364.4" x2="1194.6" y2="597.8" stroke="#eceff4"/><line x1="959.8" y1="364.5" x2="1222.2" y2="364.5" stroke="#e1e4e9" stroke-dasharray="4,2"/><text x="946.0" y="364.4" text-anchor="end" font-size="8.8" fill="#343741" font-weight="normal" dy="0.34em">18.63 GB</text><line x1="959.8" y1="422.5" x2="1222.2" y2="422.5" stroke="#e1e4e9" stroke-dasharray="4,2"/><text x="946.0" y="422.6" text-anchor="end" font-size="8.8" fill="#343741" font-weight="normal" dy="0.34em">13.97 GB</text><line x1="959.8" y1="481.5" x2="1222.2" y2="481.5" stroke="#e1e4e9" stroke-dasharray="4,2"/><text x="946.0" y="481.0" text-anchor="end" font-size="8.8" fill="#343741" font-weight="normal" dy="0.34em">9.31 GB</text><line x1="959.8" y1="539.5" x2="1222.2" y2="539.5" stroke="#e1e4e9" stroke-dasharray="4,2"/><text x="946.0" y="539.4" text-anchor="end" font-size="8.8" fill="#343741" font-weight="normal" dy="0.34em">4.66 GB</text><line x1="959.8" y1="597.5" x2="1222.2" y2="597.5" stroke="#e1e4e9" stroke-dasharray="4,2"/><text x="946.0" y="597.8" text-anchor="end" font-size="8.8" fill="#343741" font-weight="normal" dy="0.34em">0 Byte</text><line x1="1167.4" y1="364.4" x2="1167.4" y2="597.8" stroke="#bccbdc" stroke-dasharray="6,3"/><line x1="996.6" y1="597.8" x2="996.6" y2="605.8" stroke="#535966"/><text x="996.6" y="615.2" text-anchor="middle" font-size="8.8" fill="#343741" font-weight="normal" dy="0.34em">3. Sep</text><line x1="1062.6" y1="597.8" x2="1062.6" y2="605.8" stroke="#535966"/><text x="1062.6" y="615.2" text-anchor="middle" font-size="8.8" fill="#343741" font-weight="normal" dy="0.34em">12:00 pm</text><line x1="1128.6" y1="597.8" x2="1128.6" y2="605.8" stroke="#535966"/><text x="1128.6" y="615.2" text-anchor="middle" font-size="8.8" fill="#343741" font-weight="normal" dy="0.34em">4. Sep</text><line x1="1194.6" y1="597.8" x2="1194.6" y2="605.8" stroke="#535966"/><text x="1194.6" y="615.2" text-anchor="middle" font-size="8.8" fill="#343741" font-weight="normal" dy="0.34em">12:00 pm</text><line x1="960" y1="417.5" x2="1222.2" y2="417.5" stroke="#ab95a0" stroke-width="1" stroke-dasharray="7,2.25"/><g opacity="1"><path d="M959.8,471.5L969.1,471.7L980.1,473.0L991.1,472.8L1002.1,472.2L1013.1,471.9L1024.1,473.3L1035.1,472.8L1046.1,472.2L1057.1,475.6L1068.1,475.0L1079.1,475.0L1090.1,474.2L1101.1,473.6L1112.1,472.2L1123.1,471.7L1134.1,471.7L1145.1,473.0L1156.1,472.2L1167.1,472.2L1178.1,477.3L1189.1,477.8L1200.1,477.8L1211.1,477.8L1222.1,478.7" fill="none" stroke="#54b399" stroke-width="1.1" stroke-linejoin="round"/><circle cx="969.1" cy="471.7" r="1.9" fill="#fff" stroke="#54b399" stroke-width="1"/><circle cx="980.1" cy="473.0" r="1.9" fill="#fff" stroke="#54b399" stroke-width="1"/><circle cx="991.1" cy="472.8" r="1.9" fill="#fff" stroke="#54b399" stroke-width="1"/><circle cx="1002.1" cy="472.2" r="1.9" fill="#fff" stroke="#54b399" stroke-width="1"/><circle cx="1013.1" cy="471.9" r="1.9" fill="#fff" stroke="#54b399" stroke-width="1"/><circle cx="1024.1" cy="473.3" r="1.9" fill="#fff" stroke="#54b399" stroke-width="1"/><circle cx="1035.1" cy="472.8" r="1.9" fill="#fff" stroke="#54b399" stroke-width="1"/><circle cx="1046.1" cy="472.2" r="1.9" fill="#fff" stroke="#54b399" stroke-width="1"/><circle cx="1057.1" cy="475.6" r="1.9" fill="#fff" stroke="#54b399" stroke-width="1"/><circle cx="1068.1" cy="475.0" r="1.9" fill="#fff" stroke="#54b399" stroke-width="1"/><circle cx="1079.1" cy="475.0" r="1.9" fill="#fff" stroke="#54b399" stroke-width="1"/><circle cx="1090.1" cy="474.2" r="1.9" fill="#fff" stroke="#54b399" stroke-width="1"/><circle cx="1101.1" cy="473.6" r="1.9" fill="#fff" stroke="#54b399" stroke-width="1"/><circle cx="1112.1" cy="472.2" r="1.9" fill="#fff" stroke="#54b399" stroke-width="1"/><circle cx="1123.1" cy="471.7" r="1.9" fill="#fff" stroke="#54b399" stroke-width="1"/><circle cx="1134.1" cy="471.7" r="1.9" fill="#fff" stroke="#54b399" stroke-width="1"/><circle cx="1145.1" cy="473.0" r="1.9" fill="#fff" stroke="#54b399" stroke-width="1"/><circle cx="1156.1" cy="472.2" r="1.9" fill="#fff" stroke="#54b399" stroke-width="1"/><circle cx="1167.1" cy="472.2" r="1.9" fill="#fff" stroke="#54b399" stroke-width="1"/><circle cx="1178.1" cy="477.3" r="1.9" fill="#fff" stroke="#54b399" stroke-width="1"/><circle cx="1189.1" cy="477.8" r="1.9" fill="#fff" stroke="#54b399" stroke-width="1"/><circle cx="1200.1" cy="477.8" r="1.9" fill="#fff" stroke="#54b399" stroke-width="1"/><circle cx="1211.1" cy="477.8" r="1.9" fill="#fff" stroke="#54b399" stroke-width="1"/><circle cx="1222.1" cy="478.7" r="1.9" fill="#fff" stroke="#54b399" stroke-width="1"/></g><g opacity="1"><path d="M959.8,475.0L969.1,475.0L980.1,474.5L991.1,474.2L1002.1,474.2L1013.1,474.2L1024.1,473.3L1035.1,472.8L1046.1,480.6L1057.1,480.0L1068.1,479.7L1079.1,479.7L1090.1,479.2L1101.1,478.6L1112.1,478.3L1123.1,477.7L1134.1,477.5L1145.1,477.3L1156.1,477.3L1167.1,475.9L1178.1,475.0L1189.1,472.8L1200.1,474.2L1211.1,474.2L1222.1,475.6" fill="none" stroke="#6092c0" stroke-width="1.1" stroke-linejoin="round"/><circle cx="969.1" cy="475.0" r="1.9" fill="#fff" stroke="#6092c0" stroke-width="1"/><circle cx="980.1" cy="474.5" r="1.9" fill="#fff" stroke="#6092c0" stroke-width="1"/><circle cx="991.1" cy="474.2" r="1.9" fill="#fff" stroke="#6092c0" stroke-width="1"/><circle cx="1002.1" cy="474.2" r="1.9" fill="#fff" stroke="#6092c0" stroke-width="1"/><circle cx="1013.1" cy="474.2" r="1.9" fill="#fff" stroke="#6092c0" stroke-width="1"/><circle cx="1024.1" cy="473.3" r="1.9" fill="#fff" stroke="#6092c0" stroke-width="1"/><circle cx="1035.1" cy="472.8" r="1.9" fill="#fff" stroke="#6092c0" stroke-width="1"/><circle cx="1046.1" cy="480.6" r="1.9" fill="#fff" stroke="#6092c0" stroke-width="1"/><circle cx="1057.1" cy="480.0" r="1.9" fill="#fff" stroke="#6092c0" stroke-width="1"/><circle cx="1068.1" cy="479.7" r="1.9" fill="#fff" stroke="#6092c0" stroke-width="1"/><circle cx="1079.1" cy="479.7" r="1.9" fill="#fff" stroke="#6092c0" stroke-width="1"/><circle cx="1090.1" cy="479.2" r="1.9" fill="#fff" stroke="#6092c0" stroke-width="1"/><circle cx="1101.1" cy="478.6" r="1.9" fill="#fff" stroke="#6092c0" stroke-width="1"/><circle cx="1112.1" cy="478.3" r="1.9" fill="#fff" stroke="#6092c0" stroke-width="1"/><circle cx="1123.1" cy="477.7" r="1.9" fill="#fff" stroke="#6092c0" stroke-width="1"/><circle cx="1134.1" cy="477.5" r="1.9" fill="#fff" stroke="#6092c0" stroke-width="1"/><circle cx="1145.1" cy="477.3" r="1.9" fill="#fff" stroke="#6092c0" stroke-width="1"/><circle cx="1156.1" cy="477.3" r="1.9" fill="#fff" stroke="#6092c0" stroke-width="1"/><circle cx="1167.1" cy="475.9" r="1.9" fill="#fff" stroke="#6092c0" stroke-width="1"/><circle cx="1178.1" cy="475.0" r="1.9" fill="#fff" stroke="#6092c0" stroke-width="1"/><circle cx="1189.1" cy="472.8" r="1.9" fill="#fff" stroke="#6092c0" stroke-width="1"/><circle cx="1200.1" cy="474.2" r="1.9" fill="#fff" stroke="#6092c0" stroke-width="1"/><circle cx="1211.1" cy="474.2" r="1.9" fill="#fff" stroke="#6092c0" stroke-width="1"/><circle cx="1222.1" cy="475.6" r="1.9" fill="#fff" stroke="#6092c0" stroke-width="1"/></g><g opacity="1"><path d="M959.8,593.2L969.1,593.2L980.1,593.2L991.1,593.2L1002.1,593.2L1013.1,593.2L1024.1,593.2L1035.1,593.2L1046.1,593.2L1057.1,593.2L1068.1,593.2L1079.1,593.2L1090.1,593.2L1101.1,593.2L1112.1,593.2L1123.1,593.2L1134.1,593.2L1145.1,593.2L1156.1,593.2L1167.1,593.2L1178.1,593.2L1189.1,593.2L1200.1,593.2L1211.1,593.2L1222.1,593.2" fill="none" stroke="#d36086" stroke-width="1.3" stroke-linejoin="round"/><circle cx="969.1" cy="593.2" r="1.9" fill="#fff" stroke="#d36086" stroke-width="1"/><circle cx="980.1" cy="593.2" r="1.9" fill="#fff" stroke="#d36086" stroke-width="1"/><circle cx="991.1" cy="593.2" r="1.9" fill="#fff" stroke="#d36086" stroke-width="1"/><circle cx="1002.1" cy="593.2" r="1.9" fill="#fff" stroke="#d36086" stroke-width="1"/><circle cx="1013.1" cy="593.2" r="1.9" fill="#fff" stroke="#d36086" stroke-width="1"/><circle cx="1024.1" cy="593.2" r="1.9" fill="#fff" stroke="#d36086" stroke-width="1"/><circle cx="1035.1" cy="593.2" r="1.9" fill="#fff" stroke="#d36086" stroke-width="1"/><circle cx="1046.1" cy="593.2" r="1.9" fill="#fff" stroke="#d36086" stroke-width="1"/><circle cx="1057.1" cy="593.2" r="1.9" fill="#fff" stroke="#d36086" stroke-width="1"/><circle cx="1068.1" cy="593.2" r="1.9" fill="#fff" stroke="#d36086" stroke-width="1"/><circle cx="1079.1" cy="593.2" r="1.9" fill="#fff" stroke="#d36086" stroke-width="1"/><circle cx="1090.1" cy="593.2" r="1.9" fill="#fff" stroke="#d36086" stroke-width="1"/><circle cx="1101.1" cy="593.2" r="1.9" fill="#fff" stroke="#d36086" stroke-width="1"/><circle cx="1112.1" cy="593.2" r="1.9" fill="#fff" stroke="#d36086" stroke-width="1"/><circle cx="1123.1" cy="593.2" r="1.9" fill="#fff" stroke="#d36086" stroke-width="1"/><circle cx="1134.1" cy="593.2" r="1.9" fill="#fff" stroke="#d36086" stroke-width="1"/><circle cx="1145.1" cy="593.2" r="1.9" fill="#fff" stroke="#d36086" stroke-width="1"/><circle cx="1156.1" cy="593.2" r="1.9" fill="#fff" stroke="#d36086" stroke-width="1"/><circle cx="1167.1" cy="593.2" r="1.9" fill="#fff" stroke="#d36086" stroke-width="1"/><circle cx="1178.1" cy="593.2" r="1.9" fill="#fff" stroke="#d36086" stroke-width="1"/><circle cx="1189.1" cy="593.2" r="1.9" fill="#fff" stroke="#d36086" stroke-width="1"/><circle cx="1200.1" cy="593.2" r="1.9" fill="#fff" stroke="#d36086" stroke-width="1"/><circle cx="1211.1" cy="593.2" r="1.9" fill="#fff" stroke="#d36086" stroke-width="1"/><circle cx="1222.1" cy="593.2" r="1.9" fill="#fff" stroke="#d36086" stroke-width="1"/></g><line x1="960" y1="592.1" x2="1222.2" y2="592.1" stroke="#eea24f" stroke-width="0.8" stroke-dasharray="7,2.25"/><line x1="1336.4" y1="364.4" x2="1336.4" y2="652.8" stroke="#eceff4"/><line x1="1403.8" y1="364.4" x2="1403.8" y2="652.8" stroke="#eceff4"/><line x1="1471.3" y1="364.4" x2="1471.3" y2="652.8" stroke="#eceff4"/><line x1="1538.7" y1="364.4" x2="1538.7" y2="652.8" stroke="#eceff4"/><line x1="1298.1" y1="364.5" x2="1565.9" y2="364.5" stroke="#e1e4e9" stroke-dasharray="4,2"/><text x="1285.5" y="364.4" text-anchor="end" font-size="8.8" fill="#343741" font-weight="normal" dy="0.34em">2 ms</text><line x1="1298.1" y1="400.5" x2="1565.9" y2="400.5" stroke="#e1e4e9" stroke-dasharray="4,2"/><text x="1285.5" y="400.4" text-anchor="end" font-size="8.8" fill="#343741" font-weight="normal" dy="0.34em">1.75 ms</text><line x1="1298.1" y1="436.5" x2="1565.9" y2="436.5" stroke="#e1e4e9" stroke-dasharray="4,2"/><text x="1285.5" y="436.5" text-anchor="end" font-size="8.8" fill="#343741" font-weight="normal" dy="0.34em">1.50 ms</text><line x1="1298.1" y1="472.5" x2="1565.9" y2="472.5" stroke="#e1e4e9" stroke-dasharray="4,2"/><text x="1285.5" y="472.5" text-anchor="end" font-size="8.8" fill="#343741" font-weight="normal" dy="0.34em">1.25 ms</text><line x1="1298.1" y1="508.5" x2="1565.9" y2="508.5" stroke="#e1e4e9" stroke-dasharray="4,2"/><text x="1285.5" y="508.6" text-anchor="end" font-size="8.8" fill="#343741" font-weight="normal" dy="0.34em">1 ms</text><line x1="1298.1" y1="544.5" x2="1565.9" y2="544.5" stroke="#e1e4e9" stroke-dasharray="4,2"/><text x="1285.5" y="544.6" text-anchor="end" font-size="8.8" fill="#343741" font-weight="normal" dy="0.34em">0.75 ms</text><line x1="1298.1" y1="580.5" x2="1565.9" y2="580.5" stroke="#e1e4e9" stroke-dasharray="4,2"/><text x="1285.5" y="580.7" text-anchor="end" font-size="8.8" fill="#343741" font-weight="normal" dy="0.34em">0.50 ms</text><line x1="1298.1" y1="616.5" x2="1565.9" y2="616.5" stroke="#e1e4e9" stroke-dasharray="4,2"/><text x="1285.5" y="616.8" text-anchor="end" font-size="8.8" fill="#343741" font-weight="normal" dy="0.34em">0.25 ms</text><line x1="1298.1" y1="652.5" x2="1565.9" y2="652.5" stroke="#e1e4e9" stroke-dasharray="4,2"/><text x="1285.5" y="652.8" text-anchor="end" font-size="8.8" fill="#343741" font-weight="normal" dy="0.34em">0 ms</text><line x1="1510.2" y1="364.4" x2="1510.2" y2="652.8" stroke="#bccbdc" stroke-dasharray="6,3"/><line x1="1336.4" y1="652.8" x2="1336.4" y2="660.8" stroke="#535966"/><text x="1336.4" y="670.4" text-anchor="middle" font-size="8.8" fill="#343741" font-weight="normal" dy="0.34em">3. Sep</text><line x1="1403.8" y1="652.8" x2="1403.8" y2="660.8" stroke="#535966"/><text x="1403.8" y="670.4" text-anchor="middle" font-size="8.8" fill="#343741" font-weight="normal" dy="0.34em">12:00 pm</text><line x1="1471.3" y1="652.8" x2="1471.3" y2="660.8" stroke="#535966"/><text x="1471.3" y="670.4" text-anchor="middle" font-size="8.8" fill="#343741" font-weight="normal" dy="0.34em">4. Sep</text><line x1="1538.7" y1="652.8" x2="1538.7" y2="660.8" stroke="#535966"/><text x="1538.7" y="670.4" text-anchor="middle" font-size="8.8" fill="#343741" font-weight="normal" dy="0.34em">12:00 pm</text><g opacity="1"><path d="M1308.3,631.8C1312.0,631.7 1315.8,631.5 1319.5,631.0C1323.3,630.5 1327.0,630.0 1330.8,628.1C1334.5,626.2 1338.3,613.6 1342.0,612.9C1345.8,612.2 1349.5,611.8 1353.3,611.8C1357.0,611.8 1360.8,630.3 1364.5,630.3C1368.2,630.3 1372.0,483.4 1375.7,483.4C1379.5,483.4 1383.2,494.4 1387.0,516.4C1390.7,538.4 1394.5,628.5 1398.2,631.5C1402.0,634.5 1405.7,636.0 1409.5,636.0C1413.2,636.0 1416.9,633.1 1420.7,628.1C1424.4,623.1 1428.2,610.4 1431.9,606.3C1435.7,602.2 1439.4,602.8 1443.2,600.1C1446.9,597.4 1450.7,590.3 1454.4,590.3C1458.2,590.3 1461.9,608.5 1465.6,608.5C1469.4,608.5 1473.1,576.4 1476.9,576.4C1480.6,576.4 1484.4,630.3 1488.1,630.3C1491.9,630.3 1495.6,629.3 1499.4,627.4C1503.1,625.5 1506.9,526.8 1510.6,490.4C1514.3,454.0 1518.1,409.2 1521.8,409.2C1525.6,409.2 1529.3,638.3 1533.1,638.3C1536.8,638.3 1540.6,637.3 1544.3,635.4C1548.1,633.5 1551.8,624.5 1555.6,624.5C1559.3,624.5 1563.1,635.9 1566.8,647.4" fill="none" stroke="#54b399" stroke-width="1.1" stroke-linejoin="round"/><circle cx="1308.3" cy="631.8" r="1.9" fill="#fff" stroke="#54b399" stroke-width="1"/><circle cx="1319.5" cy="631.0" r="1.9" fill="#fff" stroke="#54b399" stroke-width="1"/><circle cx="1330.8" cy="628.1" r="1.9" fill="#fff" stroke="#54b399" stroke-width="1"/><circle cx="1342.0" cy="612.9" r="1.9" fill="#fff" stroke="#54b399" stroke-width="1"/><circle cx="1353.3" cy="611.8" r="1.9" fill="#fff" stroke="#54b399" stroke-width="1"/><circle cx="1364.5" cy="630.3" r="1.9" fill="#fff" stroke="#54b399" stroke-width="1"/><circle cx="1375.7" cy="483.4" r="1.9" fill="#fff" stroke="#54b399" stroke-width="1"/><circle cx="1387.0" cy="516.4" r="1.9" fill="#fff" stroke="#54b399" stroke-width="1"/><circle cx="1398.2" cy="631.5" r="1.9" fill="#fff" stroke="#54b399" stroke-width="1"/><circle cx="1409.5" cy="636.0" r="1.9" fill="#fff" stroke="#54b399" stroke-width="1"/><circle cx="1420.7" cy="628.1" r="1.9" fill="#fff" stroke="#54b399" stroke-width="1"/><circle cx="1431.9" cy="606.3" r="1.9" fill="#fff" stroke="#54b399" stroke-width="1"/><circle cx="1443.2" cy="600.1" r="1.9" fill="#fff" stroke="#54b399" stroke-width="1"/><circle cx="1454.4" cy="590.3" r="1.9" fill="#fff" stroke="#54b399" stroke-width="1"/><circle cx="1465.6" cy="608.5" r="1.9" fill="#fff" stroke="#54b399" stroke-width="1"/><circle cx="1476.9" cy="576.4" r="1.9" fill="#fff" stroke="#54b399" stroke-width="1"/><circle cx="1488.1" cy="630.3" r="1.9" fill="#fff" stroke="#54b399" stroke-width="1"/><circle cx="1499.4" cy="627.4" r="1.9" fill="#fff" stroke="#54b399" stroke-width="1"/><circle cx="1510.6" cy="490.4" r="1.9" fill="#fff" stroke="#54b399" stroke-width="1"/><circle cx="1521.8" cy="409.2" r="1.9" fill="#fff" stroke="#54b399" stroke-width="1"/><circle cx="1533.1" cy="638.3" r="1.9" fill="#fff" stroke="#54b399" stroke-width="1"/><circle cx="1544.3" cy="635.4" r="1.9" fill="#fff" stroke="#54b399" stroke-width="1"/><circle cx="1555.6" cy="624.5" r="1.9" fill="#fff" stroke="#54b399" stroke-width="1"/><circle cx="1566.8" cy="647.4" r="1.9" fill="#fff" stroke="#54b399" stroke-width="1"/></g><g opacity="1"><path d="M1308.3,633.6C1312.0,633.5 1315.8,633.4 1319.5,632.9C1323.3,632.4 1327.0,632.0 1330.8,630.3C1334.5,628.6 1338.3,615.3 1342.0,613.6C1345.8,611.9 1349.5,611.0 1353.3,611.0C1357.0,611.0 1360.8,630.3 1364.5,630.3C1368.2,630.3 1372.0,473.6 1375.7,473.6C1379.5,473.6 1383.2,479.5 1387.0,491.2C1390.7,502.9 1394.5,627.3 1398.2,631.0C1402.0,634.7 1405.7,636.5 1409.5,636.5C1413.2,636.5 1416.9,634.1 1420.7,629.2C1424.4,624.3 1428.2,608.1 1431.9,605.6C1435.7,603.1 1439.4,604.2 1443.2,601.9C1446.9,599.6 1450.7,591.7 1454.4,591.7C1458.2,591.7 1461.9,608.5 1465.6,608.5C1469.4,608.5 1473.1,572.1 1476.9,572.1C1480.6,572.1 1484.4,630.3 1488.1,630.3C1491.9,630.3 1495.6,629.6 1499.4,628.1C1503.1,626.6 1506.9,514.7 1510.6,479.7C1514.3,444.7 1518.1,418.1 1521.8,418.1C1525.6,418.1 1529.3,624.9 1533.1,631.0C1536.8,637.1 1540.6,640.2 1544.3,640.2C1548.1,640.2 1551.8,626.3 1555.6,626.3C1559.3,626.3 1563.1,637.4 1566.8,648.5" fill="none" stroke="#6092c0" stroke-width="1.1" stroke-linejoin="round"/><circle cx="1308.3" cy="633.6" r="1.9" fill="#fff" stroke="#6092c0" stroke-width="1"/><circle cx="1319.5" cy="632.9" r="1.9" fill="#fff" stroke="#6092c0" stroke-width="1"/><circle cx="1330.8" cy="630.3" r="1.9" fill="#fff" stroke="#6092c0" stroke-width="1"/><circle cx="1342.0" cy="613.6" r="1.9" fill="#fff" stroke="#6092c0" stroke-width="1"/><circle cx="1353.3" cy="611.0" r="1.9" fill="#fff" stroke="#6092c0" stroke-width="1"/><circle cx="1364.5" cy="630.3" r="1.9" fill="#fff" stroke="#6092c0" stroke-width="1"/><circle cx="1375.7" cy="473.6" r="1.9" fill="#fff" stroke="#6092c0" stroke-width="1"/><circle cx="1387.0" cy="491.2" r="1.9" fill="#fff" stroke="#6092c0" stroke-width="1"/><circle cx="1398.2" cy="631.0" r="1.9" fill="#fff" stroke="#6092c0" stroke-width="1"/><circle cx="1409.5" cy="636.5" r="1.9" fill="#fff" stroke="#6092c0" stroke-width="1"/><circle cx="1420.7" cy="629.2" r="1.9" fill="#fff" stroke="#6092c0" stroke-width="1"/><circle cx="1431.9" cy="605.6" r="1.9" fill="#fff" stroke="#6092c0" stroke-width="1"/><circle cx="1443.2" cy="601.9" r="1.9" fill="#fff" stroke="#6092c0" stroke-width="1"/><circle cx="1454.4" cy="591.7" r="1.9" fill="#fff" stroke="#6092c0" stroke-width="1"/><circle cx="1465.6" cy="608.5" r="1.9" fill="#fff" stroke="#6092c0" stroke-width="1"/><circle cx="1476.9" cy="572.1" r="1.9" fill="#fff" stroke="#6092c0" stroke-width="1"/><circle cx="1488.1" cy="630.3" r="1.9" fill="#fff" stroke="#6092c0" stroke-width="1"/><circle cx="1499.4" cy="628.1" r="1.9" fill="#fff" stroke="#6092c0" stroke-width="1"/><circle cx="1510.6" cy="479.7" r="1.9" fill="#fff" stroke="#6092c0" stroke-width="1"/><circle cx="1521.8" cy="418.1" r="1.9" fill="#fff" stroke="#6092c0" stroke-width="1"/><circle cx="1533.1" cy="631.0" r="1.9" fill="#fff" stroke="#6092c0" stroke-width="1"/><circle cx="1544.3" cy="640.2" r="1.9" fill="#fff" stroke="#6092c0" stroke-width="1"/><circle cx="1555.6" cy="626.3" r="1.9" fill="#fff" stroke="#6092c0" stroke-width="1"/><circle cx="1566.8" cy="648.5" r="1.9" fill="#fff" stroke="#6092c0" stroke-width="1"/></g><g opacity="1"><path d="M1308.3,646.3C1312.0,646.3 1315.8,646.3 1319.5,646.3C1323.3,646.3 1327.0,646.3 1330.8,646.3C1334.5,646.3 1338.3,646.3 1342.0,646.3C1345.8,646.3 1349.5,646.3 1353.3,646.3C1357.0,646.3 1360.8,646.3 1364.5,646.3C1368.2,646.3 1372.0,646.3 1375.7,646.3C1379.5,646.3 1383.2,646.3 1387.0,646.3C1390.7,646.3 1394.5,646.3 1398.2,646.3C1402.0,646.3 1405.7,646.3 1409.5,646.3C1413.2,646.3 1416.9,646.3 1420.7,646.3C1424.4,646.3 1428.2,646.3 1431.9,646.3C1435.7,646.3 1439.4,646.3 1443.2,646.3C1446.9,646.3 1450.7,646.3 1454.4,646.3C1458.2,646.3 1461.9,646.3 1465.6,646.3C1469.4,646.3 1473.1,646.3 1476.9,646.3C1480.6,646.3 1484.4,646.3 1488.1,646.3C1491.9,646.3 1495.6,646.3 1499.4,646.3C1503.1,646.3 1506.9,646.3 1510.6,646.3C1514.3,646.3 1518.1,646.3 1521.8,646.3C1525.6,646.3 1529.3,646.3 1533.1,646.3C1536.8,646.3 1540.6,646.3 1544.3,646.3C1548.1,646.3 1551.8,646.3 1555.6,646.3C1559.3,646.3 1563.1,649.1 1566.8,652.0" fill="none" stroke="#d36086" stroke-width="1.1" stroke-linejoin="round"/><circle cx="1308.3" cy="646.3" r="1.9" fill="#fff" stroke="#d36086" stroke-width="1"/><circle cx="1319.5" cy="646.3" r="1.9" fill="#fff" stroke="#d36086" stroke-width="1"/><circle cx="1330.8" cy="646.3" r="1.9" fill="#fff" stroke="#d36086" stroke-width="1"/><circle cx="1342.0" cy="646.3" r="1.9" fill="#fff" stroke="#d36086" stroke-width="1"/><circle cx="1353.3" cy="646.3" r="1.9" fill="#fff" stroke="#d36086" stroke-width="1"/><circle cx="1364.5" cy="646.3" r="1.9" fill="#fff" stroke="#d36086" stroke-width="1"/><circle cx="1375.7" cy="646.3" r="1.9" fill="#fff" stroke="#d36086" stroke-width="1"/><circle cx="1387.0" cy="646.3" r="1.9" fill="#fff" stroke="#d36086" stroke-width="1"/><circle cx="1398.2" cy="646.3" r="1.9" fill="#fff" stroke="#d36086" stroke-width="1"/><circle cx="1409.5" cy="646.3" r="1.9" fill="#fff" stroke="#d36086" stroke-width="1"/><circle cx="1420.7" cy="646.3" r="1.9" fill="#fff" stroke="#d36086" stroke-width="1"/><circle cx="1431.9" cy="646.3" r="1.9" fill="#fff" stroke="#d36086" stroke-width="1"/><circle cx="1443.2" cy="646.3" r="1.9" fill="#fff" stroke="#d36086" stroke-width="1"/><circle cx="1454.4" cy="646.3" r="1.9" fill="#fff" stroke="#d36086" stroke-width="1"/><circle cx="1465.6" cy="646.3" r="1.9" fill="#fff" stroke="#d36086" stroke-width="1"/><circle cx="1476.9" cy="646.3" r="1.9" fill="#fff" stroke="#d36086" stroke-width="1"/><circle cx="1488.1" cy="646.3" r="1.9" fill="#fff" stroke="#d36086" stroke-width="1"/><circle cx="1499.4" cy="646.3" r="1.9" fill="#fff" stroke="#d36086" stroke-width="1"/><circle cx="1510.6" cy="646.3" r="1.9" fill="#fff" stroke="#d36086" stroke-width="1"/><circle cx="1521.8" cy="646.3" r="1.9" fill="#fff" stroke="#d36086" stroke-width="1"/><circle cx="1533.1" cy="646.3" r="1.9" fill="#fff" stroke="#d36086" stroke-width="1"/><circle cx="1544.3" cy="646.3" r="1.9" fill="#fff" stroke="#d36086" stroke-width="1"/><circle cx="1555.6" cy="646.3" r="1.9" fill="#fff" stroke="#d36086" stroke-width="1"/><circle cx="1566.8" cy="652.0" r="1.9" fill="#fff" stroke="#d36086" stroke-width="1"/></g></svg>
<div class="abs" style="left:211px;top:0;width:332px;height:786px"><svg width="14" height="8" style="position:absolute;left:15px;top:700.7px"><line x1="0" y1="4" x2="13" y2="4" stroke="#54b399" stroke-width="1.3"/><circle cx="6.5" cy="4" r="1.9" fill="#fff" stroke="#54b399" stroke-width="1.1"/></svg><div class="lg" style="left:32.6px;top:696.7px">instance-0000000008 3.8</div><svg width="14" height="8" style="position:absolute;left:15px;top:723.5px"><line x1="0" y1="4" x2="13" y2="4" stroke="#6092c0" stroke-width="1.3"/><circle cx="6.5" cy="4" r="1.9" fill="#fff" stroke="#6092c0" stroke-width="1.1"/></svg><div class="lg" style="left:32.6px;top:719.5px">instance-0000000009 6.5</div><svg width="14" height="8" style="position:absolute;left:15px;top:746.1px"><line x1="0" y1="4" x2="13" y2="4" stroke="#d36086" stroke-width="1.3"/><circle cx="6.5" cy="4" r="1.9" fill="#fff" stroke="#d36086" stroke-width="1.1"/></svg><div class="lg" style="left:32.6px;top:742.1px">tiebreaker-0000000011 4.5</div></div><div class="abs" style="left:555.5px;top:0;width:332px;height:786px"><svg width="14" height="8" style="position:absolute;left:15px;top:700.7px"><line x1="0" y1="4" x2="13" y2="4" stroke="#54b399" stroke-width="1.3"/><circle cx="6.5" cy="4" r="1.9" fill="#fff" stroke="#54b399" stroke-width="1.1"/></svg><div class="lg" style="left:32.6px;top:696.7px">instance-0000000008 40.5%</div><svg width="14" height="8" style="position:absolute;left:15px;top:723.5px"><line x1="0" y1="4" x2="13" y2="4" stroke="#6092c0" stroke-width="1.3"/><circle cx="6.5" cy="4" r="1.9" fill="#fff" stroke="#6092c0" stroke-width="1.1"/></svg><div class="lg" style="left:32.6px;top:719.5px">instance-0000000009 48.1%</div><svg width="14" height="8" style="position:absolute;left:15px;top:746.1px"><line x1="0" y1="4" x2="13" y2="4" stroke="#d36086" stroke-width="1.3"/><circle cx="6.5" cy="4" r="1.9" fill="#fff" stroke="#d36086" stroke-width="1.1"/></svg><div class="lg" style="left:32.6px;top:742.1px">tiebreaker-0000000011 0.0%</div></div><div class="abs" style="left:1244.5px;top:0;width:332px;height:786px"><svg width="14" height="8" style="position:absolute;left:15px;top:700.7px"><line x1="0" y1="4" x2="13" y2="4" stroke="#54b399" stroke-width="1.3"/><circle cx="6.5" cy="4" r="1.9" fill="#fff" stroke="#54b399" stroke-width="1.1"/></svg><div class="lg" style="left:32.6px;top:696.7px">instance-0000000008-Total 1.12 ms</div><svg width="14" height="8" style="position:absolute;left:15px;top:723.5px"><line x1="0" y1="4" x2="13" y2="4" stroke="#6092c0" stroke-width="1.3"/><circle cx="6.5" cy="4" r="1.9" fill="#fff" stroke="#6092c0" stroke-width="1.1"/></svg><div class="lg" style="left:32.6px;top:719.5px">instance-0000000009-Total 1.20 ms</div><svg width="14" height="8" style="position:absolute;left:15px;top:746.1px"><line x1="0" y1="4" x2="13" y2="4" stroke="#d36086" stroke-width="1.3"/><circle cx="6.5" cy="4" r="1.9" fill="#fff" stroke="#d36086" stroke-width="1.1"/></svg><div class="lg" style="left:32.6px;top:742.1px">tiebreaker-0000000011-Total 0.04 ms</div></div><div class="abs" style="left:900px;top:640px;width:332px;height:98.4px;overflow:hidden"><svg width="14" height="8" style="position:absolute;left:15px;top:5.5px"><line x1="0" y1="4" x2="13" y2="4" stroke="#54b399" stroke-width="1.3"/><circle cx="6.5" cy="4" r="1.9" fill="#fff" stroke="#54b399" stroke-width="1.1"/></svg><div class="lg" style="left:32.6px;top:1.5px">instance-0000000008 9.97 GB</div><svg width="14" height="8" style="position:absolute;left:15px;top:28.100000000000023px"><line x1="0" y1="4" x2="13" y2="4" stroke="#6092c0" stroke-width="1.3"/><circle cx="6.5" cy="4" r="1.9" fill="#fff" stroke="#6092c0" stroke-width="1.1"/></svg><div class="lg" style="left:32.6px;top:24.100000000000023px">instance-0000000009 9.66 GB</div><svg width="14" height="8" style="position:absolute;left:15px;top:50.799999999999955px"><line x1="0" y1="4" x2="13" y2="4" stroke="#d36086" stroke-width="1.3"/><circle cx="6.5" cy="4" r="1.9" fill="#fff" stroke="#d36086" stroke-width="1.1"/></svg><div class="lg" style="left:32.6px;top:46.799999999999955px">tiebreaker-0000000011 323.88 MB</div><svg width="14" height="8" style="position:absolute;left:15px;top:73.10000000000002px"><line x1="0" y1="4" x2="5" y2="4" stroke="#69707d" stroke-width="1"/><line x1="8" y1="4" x2="13" y2="4" stroke="#69707d" stroke-width="1"/></svg><div class="lg" style="left:32.6px;top:69.10000000000002px">Max heap - instance-0000000008 14.33 GB</div><svg width="14" height="8" style="position:absolute;left:15px;top:95.70000000000005px"><line x1="0" y1="4" x2="5" y2="4" stroke="#69707d" stroke-width="1"/><line x1="8" y1="4" x2="13" y2="4" stroke="#69707d" stroke-width="1"/></svg><div class="lg" style="left:32.6px;top:91.70000000000005px">Max heap - instance-0000000009 14.33 GB</div></div>
<svg class="abs" style="left:910px;top:742px" width="60" height="16"><polygon points="5,3.8 10,13.4 0,13.4" transform="translate(5,0)" fill="#c4c7cc"/><polygon points="35.5,3.8 45,3.8 40.25,13.4" fill="#1a1c21"/></svg>
<div class="abs" style="left:928px;top:742.5px;font-size:10px;font-weight:bold;line-height:16px;color:#1a1c21">1/2</div>

<svg class="abs" style="left:0;top:0" width="1600" height="786">
<circle cx="821" cy="513.8" r="8.2" fill="#6092c0" opacity="0.25"/>
<circle cx="821" cy="513.8" r="3.4" fill="#fff" stroke="#6092c0" stroke-width="2.2"/>
</svg>
<div class="abs" style="left:724.8px;top:465.2px;width:160.3px;height:35.8px;background:#fff;border-radius:4px;box-shadow:0 1px 3px rgba(0,0,0,.3),0 0 0 0.5px rgba(0,0,0,.06)"></div>
<svg class="abs" style="left:813.5px;top:499px" width="16" height="10"><polygon points="0,1 16,1 8,8.6" fill="#fff"/><polyline points="1,1.2 8,8.4 15,1.2" fill="none" stroke="rgba(0,0,0,.12)" stroke-width="1"/><rect x="0" y="0" width="16" height="2" fill="#fff"/></svg>
<div class="abs" style="left:724.8px;top:483px;width:160.3px;height:2px;background:#eaeef4"></div>
<div class="abs" style="left:725.2px;top:484.7px;width:4.1px;height:15.3px;background:#6092c0;border-radius:0 0 0 4px"></div>
<div class="abs" style="left:731.3px;top:466.6px;font-size:10.6px;letter-spacing:0.6px;font-weight:bold;line-height:16px;color:#1a1c21;white-space:nowrap">04-09-2024 07:00:00 AM</div>
<div class="abs" style="left:733.5px;top:484.4px;font-size:11.1px;letter-spacing:0.25px;line-height:16px;color:#343741;white-space:nowrap">instance-0000000009</div>
<div class="abs" style="left:840px;top:484.4px;width:40.8px;text-align:right;font-size:10.6px;letter-spacing:0.15px;line-height:16px;color:#343741;white-space:nowrap">48.1%</div>
<div class="abs" style="left:691.7px;top:270px;font-size:20.6px;line-height:24px;color:#ff0000;white-space:nowrap">last 2 days</div>
<div class="abs" style="left:666.3px;top:383.5px;font-size:20.2px;line-height:24px;color:#ff0000;white-space:nowrap">7am</div>
<div class="abs" style="left:807.7px;top:341.2px;font-size:20.2px;line-height:24px;color:#ff0000;white-space:nowrap">7am</div>
<svg class="abs" style="left:0;top:0" width="1600" height="786">
<line x1="686.2" y1="408" x2="686.2" y2="502" stroke="#ff0000" stroke-width="1.8"/>
<polygon points="682.4,501 690,501 686.2,508.7" fill="#ff0000"/>
<line x1="827.7" y1="364.8" x2="827.7" y2="449" stroke="#ff0000" stroke-width="1.8"/>
<polygon points="823.9,448.5 831.5,448.5 827.7,456" fill="#ff0000"/>
<line x1="1599.5" y1="74" x2="1599.5" y2="786" stroke="#e3e3e3"/>
<line x1="174" y1="785.5" x2="1600" y2="785.5" stroke="#e3e3e3"/>
</svg>
<!-- top bars -->
<div class="abs" style="left:0;top:74px;width:1600px;height:18px;background:linear-gradient(rgba(0,0,0,.06),rgba(0,0,0,.02) 8px,rgba(0,0,0,0))"></div>
<div class="abs" style="left:0;top:33px;width:1600px;height:41px;background:linear-gradient(#d9d9d9,#e9e9e9 3px,#f6f6f6 11px,#fff 20px)"></div>
<div class="abs" style="left:0;top:0;width:1600px;height:33px;background:#25282f;border-bottom:1.5px solid #05060d"></div>
<svg class="abs" style="left:10px;top:0" width="32" height="28">
<circle cx="10.5" cy="6.3" r="2.6" fill="#ee5f98" stroke="#25282f" stroke-width="0.7"/>
<circle cx="9" cy="12.8" r="4.3" fill="#1b86db" stroke="#25282f" stroke-width="0.7"/>
<circle cx="25" cy="13.9" r="4.1" fill="#0c6cc0" stroke="#25282f" stroke-width="0.7"/>
<circle cx="23.6" cy="20.3" r="2.8" fill="#8ecb3c" stroke="#25282f" stroke-width="0.7"/>
<circle cx="14.4" cy="18.8" r="6.4" fill="#35b2a2" stroke="#25282f" stroke-width="0.7"/>
<circle cx="19.3" cy="7.6" r="6.4" fill="#fecf0c" stroke="#25282f" stroke-width="0.8"/>
</svg>
<div class="abs" style="left:54px;top:5px;font-size:13.4px;font-weight:bold;line-height:16px;color:#fff">Elastic</div>
<svg class="abs" style="left:1576px;top:2px" width="24" height="24"><circle cx="12.2" cy="11.3" r="10.4" fill="#e6a15a"/><text x="12.2" y="15" text-anchor="middle" font-size="10.5" font-weight="bold" fill="#1a1c21">M</text></svg>
<svg class="abs" style="left:0;top:40px" width="400" height="28">
<path d="M10,3.2 Q10,3.2 14,3.2 H57 L62,13.1 L57,23 H14 Q10,23 10,19 V7 Q10,3.2 14,3.2Z" fill="#d4e3f5"/>
<path d="M59,3.2 H138 L143,13.1 L138,23 H59 L64,13.1Z" fill="#d4e3f5"/>
<path d="M140,3.2 H269 L274,13.1 L269,23 H140 L145,13.1Z" fill="#d4e3f5"/>
<path d="M271,3.2 H330 L335,13.1 L330,23 H271 L276,13.1Z" fill="#d4e3f5"/>
<path d="M332,3.2 H381 Q386,3.2 386,8 V18 Q386,23 381,23 H332 L337,13.1Z" fill="#dcdee2"/>
</svg>
<div class="abs" style="left:19px;top:45px;font-size:10.7px;line-height:16px;color:#1a6dca;white-space:nowrap">Cloud</div>
<div class="abs" style="left:67px;top:45px;font-size:10.8px;line-height:16px;color:#1a6dca;white-space:nowrap">Deployments</div>
<div class="abs" style="left:150px;top:45px;font-size:10.7px;line-height:16px;color:#1a6dca;white-space:nowrap">b784ea32ae184b018...</div>
<div class="abs" style="left:280px;top:45px;font-size:10.6px;line-height:16px;color:#1a6dca;white-space:nowrap">AutoOps</div>
<div class="abs" style="left:344px;top:45px;font-size:10.7px;line-height:16px;color:#343741;white-space:nowrap">Nodes</div>
</body></html>
